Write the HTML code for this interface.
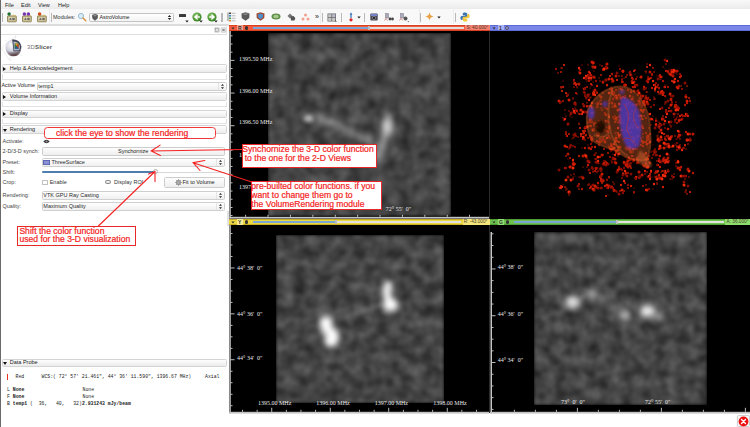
<!DOCTYPE html>
<html><head><meta charset="utf-8">
<style>
*{box-sizing:border-box;margin:0;padding:0}
html,body{width:750px;height:427px;overflow:hidden;background:#fff}
body{position:relative;font-family:"Liberation Sans",sans-serif;font-size:5.5px;color:#222}
.ab{position:absolute}
.t{position:absolute;white-space:pre;line-height:1}
.hdr{position:absolute;left:2px;width:225px;height:8.6px;border:1px solid #d4d4d4;border-radius:1.5px;background:linear-gradient(#fdfdfd,#ececec)}
.hdr .tri{position:absolute;left:0.2px;top:1.8px;width:0;height:0;border-left:3px solid #111;border-top:2px solid transparent;border-bottom:2px solid transparent}
.hdr .tri.d{left:-0.3px;top:2.3px;border-top:3px solid #111;border-left:2px solid transparent;border-right:2px solid transparent;border-bottom:0}
.hdr .lb{position:absolute;left:6.8px;top:0.6px;white-space:pre;line-height:1;color:#222}
.frm{position:absolute;left:2px;width:225px;border:1px solid #e2e2e2;border-top:0;background:#fff}
.cmb{position:absolute;height:9px;border:1px solid #cfcfcf;border-radius:1.5px;background:linear-gradient(#fefefe,#f0f0f0)}
.cmb .lb{position:absolute;left:3px;top:1.5px;white-space:pre;line-height:1;color:#111}
.spin{position:absolute;right:2px;top:1px;width:4px;height:6px}
.lbl{position:absolute;left:3px;white-space:pre;line-height:1;color:#333}
.ann{position:absolute;font-size:8.6px;line-height:1;color:#f52222;white-space:pre;-webkit-text-stroke:0.2px #f52222}
.serif{font-family:"Liberation Serif",serif;color:#e8e8e8;font-size:6px;line-height:1;position:absolute;white-space:pre}
.mono{font-family:"Liberation Mono",monospace;font-size:4.8px;line-height:1;position:absolute;white-space:pre;color:#222}
</style></head><body>

<div class="ab" style="left:0;top:0;width:750px;height:9px;background:linear-gradient(#f9f9f9,#ebebeb)"></div>
<div class="ab" style="left:0;top:9px;width:750px;height:15px;background:#fff"></div>
<div class="ab" style="left:0;top:9px;width:470px;height:15px;background:#f8f8f8"></div>
<div class="ab" style="left:0;top:24px;width:229px;height:1.5px;background:#dcdcdc"></div>
<div class="t" style="left:5px;top:3px;font-size:5.5px;color:#222">File</div>
<div class="t" style="left:21px;top:3px;font-size:5.5px;color:#222">Edit</div>
<div class="t" style="left:38px;top:3px;font-size:5.5px;color:#222">View</div>
<div class="t" style="left:58px;top:3px;font-size:5.5px;color:#222">Help</div>
<div class="ab" style="left:0;top:0;width:1px;height:427px;background:#6a6a6a"></div>
<svg class="ab" style="left:6.9px;top:11px" width="10" height="12" viewBox="0 0 10 12"><rect x="0.5" y="4.9" width="8.8" height="5.9" rx="0.5" fill="#c9bd8e" stroke="#857848" stroke-width="0.8"/><path d="M5.2 4.8 Q6.5 3.4 8.6 4.6" fill="#e2cc60" stroke="#c8b050" stroke-width="0.5"/><rect x="1.6" y="6.3" width="6.6" height="3" fill="#ddd6b8"/><path d="M2.2 8.8 L3.5 7 L4.5 8.8 M5.5 7.2 H7.5 V8.8 H5.5 Z" fill="#555" stroke="#555" stroke-width="0.4"/><circle cx="2.1" cy="3" r="1.75" fill="#1f6e34"/></svg>
<svg class="ab" style="left:21.6px;top:11px" width="10" height="12" viewBox="0 0 10 12"><rect x="0.5" y="4.9" width="8.8" height="5.9" rx="0.5" fill="#c9bd8e" stroke="#857848" stroke-width="0.8"/><path d="M5.2 4.8 Q6.5 3.4 8.6 4.6" fill="#e2cc60" stroke="#c8b050" stroke-width="0.5"/><rect x="1.6" y="6.3" width="6.6" height="3" fill="#ddd6b8"/><path d="M2.2 8.8 L3.5 7 L4.5 8.8 M5.5 7.2 H7.5 V8.8 H5.5 Z" fill="#555" stroke="#555" stroke-width="0.4"/><circle cx="2.4" cy="3" r="1.75" fill="#7a34b0"/><circle cx="6.4" cy="3" r="1.75" fill="#7a34b0"/></svg>
<svg class="ab" style="left:36.6px;top:11px" width="10" height="12" viewBox="0 0 10 12"><rect x="0.5" y="4.9" width="8.8" height="5.9" rx="0.5" fill="#c9bd8e" stroke="#857848" stroke-width="0.8"/><path d="M5.2 4.8 Q6.5 3.4 8.6 4.6" fill="#e2cc60" stroke="#c8b050" stroke-width="0.5"/><rect x="1.6" y="6.3" width="6.6" height="3" fill="#ddd6b8"/><path d="M2.2 8.8 L3.5 7 L4.5 8.8 M5.5 7.2 H7.5 V8.8 H5.5 Z" fill="#555" stroke="#555" stroke-width="0.4"/><circle cx="2.6" cy="3" r="1.75" fill="#d04a14"/></svg>
<div class="ab" style="left:48.5px;top:9px;width:1px;height:15px;background:#ececec"></div>
<div class="ab" style="left:2.0px;top:12.5px;width:1.2px;height:9px;background:#b8b8b8"></div>
<div class="ab" style="left:51.0px;top:12.5px;width:1.2px;height:9px;background:#b8b8b8"></div>
<div class="t" style="left:53px;top:15px;font-size:5.5px;color:#333">Modules:</div>
<svg class="ab" style="left:77px;top:12px" width="10" height="10" viewBox="0 0 10 10"><circle cx="4" cy="4" r="2.6" fill="#d9ecf7" stroke="#8fb6d0" stroke-width="0.9"/><path d="M6 6 L8.8 8.8" stroke="#d8903a" stroke-width="1.4" stroke-linecap="round"/></svg>
<div class="ab" style="left:88.5px;top:12.5px;width:85.5px;height:9px;border:1px solid #c4c4c4;border-radius:1.5px;background:linear-gradient(#fff,#f3f3f3)"></div>
<svg class="ab" style="left:92.3px;top:13.8px" width="6" height="7" viewBox="0 0 6 7"><path d="M0.4 1.1 L3 0.3 L5.6 1.1 L5.4 4.3 L3 6.4 L0.6 4.3 Z" fill="#5a5a5a" stroke="#333" stroke-width="0.4"/><path d="M1 1.5 L3 0.9 L5 1.5 L3 2.4 Z" fill="#999"/></svg>
<div class="t" style="left:99.5px;top:15px;font-size:5.3px;color:#222">AstroVolume</div>
<svg class="ab" style="left:167px;top:13.5px" width="5" height="7" viewBox="0 0 5 7"><path d="M0.8 3 L2.5 1 L4.2 3 Z M0.8 4 L2.5 6 L4.2 4 Z" fill="#222"/></svg>
<div class="ab" style="left:178.7px;top:14.4px;width:7px;height:2.2px;background:#3a3a3a;border-radius:0.5px"></div>
<svg class="ab" style="left:185px;top:20.0px" width="4" height="3" viewBox="0 0 4 3"><path d="M0.3 0.4 H3.7 L2 2.6 Z" fill="#222"/></svg>
<svg class="ab" style="left:191.9px;top:11.5px" width="10" height="10" viewBox="0 0 10 10"><defs><radialGradient id="g196.9" cx="0.4" cy="0.35" r="0.7"><stop offset="0" stop-color="#8cc66a"/><stop offset="1" stop-color="#2f7d1c"/></radialGradient></defs><circle cx="5" cy="5" r="4.6" fill="url(#g196.9)"/><path d="M5.2 3 L2.8 5 L5.2 7 M3 5 L7.3 5" fill="none" stroke="#fff" stroke-width="1.4" stroke-linecap="round" stroke-linejoin="round"/></svg>
<svg class="ab" style="left:199.4px;top:20.0px" width="4" height="3" viewBox="0 0 4 3"><path d="M0.3 0.4 H3.7 L2 2.6 Z" fill="#222"/></svg>
<svg class="ab" style="left:206.8px;top:11.5px" width="10" height="10" viewBox="0 0 10 10"><defs><radialGradient id="g211.8" cx="0.4" cy="0.35" r="0.7"><stop offset="0" stop-color="#8cc66a"/><stop offset="1" stop-color="#2f7d1c"/></radialGradient></defs><circle cx="5" cy="5" r="4.6" fill="url(#g211.8)"/><path d="M4.8 3 L7.2 5 L4.8 7 M7 5 L2.7 5" fill="none" stroke="#fff" stroke-width="1.4" stroke-linecap="round" stroke-linejoin="round"/></svg>
<svg class="ab" style="left:214.3px;top:20.0px" width="4" height="3" viewBox="0 0 4 3"><path d="M0.3 0.4 H3.7 L2 2.6 Z" fill="#222"/></svg>
<div class="ab" style="left:221.4px;top:12.5px;width:1.2px;height:9px;background:#b8b8b8"></div>
<svg class="ab" style="left:226.5px;top:12px" width="9" height="10" viewBox="0 0 9 10"><path d="M1 0.5 V9" stroke="#333" stroke-width="0.6"/><rect x="2" y="0.5" width="2" height="1.6" fill="#444"/><rect x="2" y="3" width="2" height="1.6" fill="#4a8ad0"/><rect x="2" y="5.5" width="2" height="1.6" fill="#4aa050"/><rect x="2" y="8" width="2" height="1.6" fill="#e09a3a"/><path d="M4.5 1.3 H8.5 M4.5 3.8 H8.5 M4.5 6.3 H8.5 M4.5 8.8 H8.5" stroke="#aaa" stroke-width="0.8"/></svg>
<svg class="ab" style="left:240.5px;top:12px" width="9" height="9" viewBox="0 0 9 9"><path d="M0.5 1.5 L4.5 0.3 L8.5 1.5 L8.3 6 L4.5 8.7 L0.7 6 Z" fill="#5a5a5a"/><path d="M1.5 2 L4.5 1.2 L7.5 2 L4.5 3.2 Z" fill="#888"/></svg>
<svg class="ab" style="left:256px;top:12px" width="9" height="9" viewBox="0 0 9 9"><path d="M0.5 1.5 L4.5 0.3 L8.5 1.5 L8.3 6 L4.5 8.7 L0.7 6 Z" fill="#a04a30"/><path d="M2 2.4 L4.5 1.6 L7 2.4 L6.8 5.5 L4.5 7.2 L2.2 5.5 Z" fill="#4d8fd0"/></svg>
<svg class="ab" style="left:270.5px;top:13px" width="10" height="7" viewBox="0 0 10 7"><ellipse cx="5" cy="3.5" rx="4.5" ry="3" fill="#5d8f45"/><ellipse cx="5" cy="3.5" rx="2.8" ry="1.7" fill="#a8c890"/></svg>
<svg class="ab" style="left:286.5px;top:13px" width="9" height="8" viewBox="0 0 9 8"><path d="M0.5 3 L3 0.5 L5.5 3 L3 5.5 Z" fill="#777"/><path d="M3.5 3.5 L6.5 3 L8.3 5 L7.5 7.5 L4 7.5 Z" fill="#555"/></svg>
<svg class="ab" style="left:301px;top:12.5px" width="9" height="8" viewBox="0 0 9 8"><circle cx="4.5" cy="2" r="1.5" fill="#f2a08f"/><circle cx="2" cy="6" r="1.5" fill="#f2a08f"/><circle cx="7" cy="6" r="1.5" fill="#f2a08f"/></svg>
<div class="t" style="left:315px;top:13px;font-size:7px;color:#222">»</div>
<div class="ab" style="left:320px;top:9px;width:1px;height:15px;background:#ececec"></div>
<div class="ab" style="left:322.2px;top:12.5px;width:1.2px;height:9px;background:#b8b8b8"></div>
<svg class="ab" style="left:326.5px;top:12.5px" width="10" height="9" viewBox="0 0 10 9"><rect x="0.5" y="0.5" width="8.5" height="8" fill="#666"/><rect x="1.2" y="1.2" width="3.2" height="3" fill="#c8c8c8"/><rect x="5.1" y="1.2" width="3.2" height="3" fill="#b8bcd0"/><rect x="1.2" y="4.9" width="3.2" height="3" fill="#c8c8c8"/><rect x="5.1" y="4.9" width="3.2" height="3" fill="#c8c8c8"/><path d="M8 7.5 L9.6 8.8" stroke="#333" stroke-width="0.8"/></svg>
<div class="ab" style="left:340.5px;top:12.5px;width:1.2px;height:9px;background:#b8b8b8"></div>
<svg class="ab" style="left:347.5px;top:12px" width="6" height="10" viewBox="0 0 6 10"><path d="M3 0.5 L4.5 2.5 L3.6 2.5 L3.6 6 L2.4 6 L2.4 2.5 L1.5 2.5 Z" fill="#2f6fb8"/><circle cx="3" cy="7.8" r="1.6" fill="#e0202a"/></svg>
<svg class="ab" style="left:357px;top:15.5px" width="4" height="3" viewBox="0 0 4 3"><path d="M0.3 0.4 H3.7 L2 2.6 Z" fill="#222"/></svg>
<div class="ab" style="left:364.0px;top:12.5px;width:1.2px;height:9px;background:#b8b8b8"></div>
<svg class="ab" style="left:369.5px;top:12.5px" width="8" height="8" viewBox="0 0 8 8"><rect x="0.3" y="0.5" width="7.4" height="7" rx="1" fill="#4a4a55"/><rect x="1" y="1.1" width="6" height="1.8" fill="#7a8ad8"/><circle cx="4" cy="5" r="1.6" fill="#222" stroke="#bbb" stroke-width="0.5"/></svg>
<svg class="ab" style="left:383.5px;top:12.5px" width="10" height="9" viewBox="0 0 10 9"><rect x="1.5" y="0.5" width="3" height="4.5" fill="#aab" stroke="#667" stroke-width="0.4"/><path d="M0.5 7.5 L2 5.5 L3.5 7.5" fill="none" stroke="#c05040" stroke-width="0.6"/><circle cx="6" cy="6" r="1.4" fill="#444"/><circle cx="8.5" cy="6" r="1.4" fill="#444"/></svg>
<svg class="ab" style="left:398.5px;top:12.5px" width="11" height="10" viewBox="0 0 11 10"><rect x="1.5" y="0.5" width="3" height="4.5" fill="#aab" stroke="#667" stroke-width="0.4"/><path d="M0.5 7.5 L2 5.5 L3.5 7.5" fill="none" stroke="#c05040" stroke-width="0.6"/><circle cx="6.5" cy="5.5" r="2" fill="#555"/><path d="M8.5 8.3 L10 8.3 L9.25 9.3 Z" fill="#222"/></svg>
<div class="ab" style="left:418.5px;top:9px;width:1px;height:15px;background:#ececec"></div>
<div class="ab" style="left:420.1px;top:12.5px;width:1.2px;height:9px;background:#b8b8b8"></div>
<svg class="ab" style="left:425px;top:12px" width="9" height="9" viewBox="0 0 9 9"><path d="M4.5 0.3 Q4.9 4.1 8.7 4.5 Q4.9 4.9 4.5 8.7 Q4.1 4.9 0.3 4.5 Q4.1 4.1 4.5 0.3 Z" fill="#e8a040"/></svg>
<svg class="ab" style="left:436.7px;top:15.5px" width="4" height="3" viewBox="0 0 4 3"><path d="M0.3 0.4 H3.7 L2 2.6 Z" fill="#222"/></svg>
<div class="ab" style="left:453px;top:9px;width:1px;height:15px;background:#ececec"></div>
<div class="ab" style="left:455.3px;top:12.5px;width:1.2px;height:9px;background:#b8b8b8"></div>
<svg class="ab" style="left:459.5px;top:11.5px" width="10" height="10" viewBox="0 0 10 10"><path d="M5 0.5 C2.5 0.5 2.8 1.6 2.8 2.6 V3.6 H5.2 V4.1 H1.8 C0.6 4.1 0.3 5.2 0.4 6.3 C0.5 7.4 1 7.9 1.8 7.9 H2.7 V6.7 C2.7 5.9 3.3 5.3 4.1 5.3 H6.2 C6.9 5.3 7.3 4.8 7.3 4.1 V2.3 C7.3 1.3 6.4 0.5 5 0.5 Z" fill="#3b74b0"/><path d="M5 9.5 C7.5 9.5 7.2 8.4 7.2 7.4 V6.4 H4.8 V5.9 H8.2 C9.4 5.9 9.7 4.8 9.6 3.7 C9.5 2.6 9 2.1 8.2 2.1 H7.3 V3.3 C7.3 4.1 6.7 4.7 5.9 4.7 H3.8 C3.1 4.7 2.7 5.2 2.7 5.9 V7.7 C2.7 8.7 3.6 9.5 5 9.5 Z" fill="#f2c83a"/></svg>
<div class="ab" style="left:1px;top:25.5px;width:226px;height:9px;background:#fff;border-bottom:1px solid #dedede;border-right:1px solid #e6e6e6"></div>
<svg class="ab" style="left:213.5px;top:26.5px" width="13" height="6" viewBox="0 0 13 6"><rect x="0.5" y="0.5" width="5" height="5" rx="1" fill="#e4e4e4" stroke="#c8c8c8" stroke-width="0.5"/><rect x="1.7" y="1.7" width="2.6" height="2.6" fill="none" stroke="#888" stroke-width="0.5"/><rect x="7" y="0.5" width="5" height="5" rx="1" fill="#e4e4e4" stroke="#c8c8c8" stroke-width="0.5"/><path d="M8.3 1.8 L10.7 4.2 M10.7 1.8 L8.3 4.2" stroke="#555" stroke-width="0.7"/></svg>
<svg class="ab" style="left:0;top:34px" width="30" height="30" viewBox="0 34 30 30">
<defs><radialGradient id="sph" cx="0.38" cy="0.35" r="0.7"><stop offset="0" stop-color="#fdfdff"/><stop offset="0.55" stop-color="#d0d0dc"/><stop offset="0.85" stop-color="#9a98a8"/><stop offset="1" stop-color="#6a6070"/></radialGradient>
<linearGradient id="shb" x1="0" y1="0" x2="0.3" y2="1"><stop offset="0" stop-color="#6a5a60" stop-opacity="0"/><stop offset="1" stop-color="#4a2a2a" stop-opacity="0.9"/></linearGradient></defs>
<path d="M1.5 48 L16 35.5 L10 61 Z M5 40 L22 56" fill="none" stroke="#d4d4d4" stroke-width="0.45"/>
<circle cx="13.4" cy="47.4" r="8" fill="url(#sph)"/>
<path d="M6 51 A8 8 0 0 0 21 51 Q14 53 6 51 Z" fill="url(#shb)"/>
<path d="M12.2 39.6 A7.9 7.9 0 0 1 21.3 46.5 L20 51 L13.5 51.5 Z" fill="#3e4152"/>
<path d="M13.4 41.4 A6.2 6.2 0 0 1 20 46.8 L19.3 50.2 L14 50.6 Z" fill="#b4b6c4"/>
<path d="M14.6 43.4 L18.6 43.4 L18.6 48.8 L14.6 48.8 Z" fill="#2f7a3a"/>
<path d="M14.6 43.4 L18.6 43.4 L16.6 46.1 Z" fill="#d89a20"/>
<path d="M18.6 43.4 L18.6 48.8 L16.6 46.1 Z" fill="#d8401c"/>
<path d="M14.6 48.8 L18.6 48.8 L16.6 46.1 Z" fill="#2452a8"/>
</svg>
<div class="t" style="left:27px;top:44.3px;font-size:6px;color:#777;letter-spacing:0.15px">3D<b style="color:#555">Slicer</b></div>
<div class="hdr" style="top:64.2px"><div class="tri"></div><div class="lb">Help &amp; Acknowledgement</div></div>
<div class="frm" style="top:73.5px;height:6.5px"></div>
<div class="t" style="left:1.5px;top:83px;font-size:5.3px;color:#222">Active Volume</div>
<div class="cmb" style="left:36.5px;top:81.5px;width:190px"></div>
<div class="ab" style="left:217.5px;top:82.5px;width:1px;height:7px;background:#e4e4e4"></div>
<div class="t" style="left:38.3px;top:83.7px;font-size:5.5px;color:#2a2a2a">temp1</div>
<svg class="ab" style="left:219.5px;top:82.5px" width="5" height="7" viewBox="0 0 5 7"><path d="M1 2.8 L2.5 1 L4 2.8 Z M1 4.2 L2.5 6 L4 4.2 Z" fill="#222"/></svg>
<div class="hdr" style="top:92.4px"><div class="tri"></div><div class="lb">Volume Information</div></div>
<div class="frm" style="top:101.5px;height:5px"></div>
<div class="hdr" style="top:109.5px"><div class="tri"></div><div class="lb">Display</div></div>
<div class="frm" style="top:118.5px;height:5px"></div>
<div class="hdr" style="top:125.4px"><div class="tri d"></div><div class="lb">Rendering</div></div>
<div class="t" style="left:2.5px;top:138.5px;font-size:5.5px;color:#444">Activate:</div>
<div class="t" style="left:2.5px;top:149.0px;font-size:5.5px;color:#444">2-D/3-D synch:</div>
<div class="t" style="left:2.5px;top:160.2px;font-size:5.5px;color:#444">Preset:</div>
<div class="t" style="left:2.5px;top:169.7px;font-size:5.5px;color:#444">Shift:</div>
<div class="t" style="left:2.5px;top:179.5px;font-size:5.5px;color:#444">Crop:</div>
<div class="t" style="left:2.5px;top:192.79999999999998px;font-size:5.5px;color:#444">Rendering:</div>
<div class="t" style="left:2.5px;top:203.7px;font-size:5.5px;color:#444">Quality:</div>
<svg class="ab" style="left:42.5px;top:138.5px" width="7" height="5" viewBox="0 0 7 5"><path d="M0.3 2.5 Q3.5 -0.8 6.7 2.5 Q3.5 5.8 0.3 2.5 Z" fill="#333"/><circle cx="3.5" cy="2.5" r="1" fill="#999"/></svg>
<div class="ab" style="left:41.5px;top:147px;width:183.5px;height:8.5px;border:1px solid #cdcdcd;border-radius:1.5px;background:linear-gradient(#fdfdfd,#eeeeee)"></div>
<div class="t" style="left:118px;top:149px;font-size:5.5px;color:#222">Synchornize</div>
<div class="cmb" style="left:41.5px;top:158px;width:183.5px"></div>
<div class="ab" style="left:216.0px;top:159px;width:1px;height:7px;background:#e4e4e4"></div>
<div class="ab" style="left:43.3px;top:160.3px;width:6.5px;height:4.5px;background:#8a90d8;border:0.5px solid #6068b0"></div>
<div class="t" style="left:51.5px;top:160.2px;font-size:5.5px;color:#2a2a2a">ThreeSurface</div>
<svg class="ab" style="left:218.0px;top:159px" width="5" height="7" viewBox="0 0 5 7"><path d="M1 2.8 L2.5 1 L4 2.8 Z M1 4.2 L2.5 6 L4 4.2 Z" fill="#222"/></svg>
<div class="ab" style="left:41.5px;top:171.5px;width:183.5px;height:1.8px;background:#d8d8d8;border-radius:1px"></div>
<div class="ab" style="left:41.5px;top:171.3px;width:113.5px;height:2px;background:#4f7fae;border-radius:1px"></div>
<div class="ab" style="left:152.6px;top:169.3px;width:5px;height:5px;background:radial-gradient(#fff,#e8e8e8);border:0.5px solid #b4b4b4;border-radius:50%"></div>
<div class="ab" style="left:42.2px;top:179.5px;width:5.4px;height:5.3px;border:0.6px solid #c0c0c0;border-radius:0.5px;background:#fff"></div>
<div class="t" style="left:49.7px;top:180px;font-size:5.5px;color:#333">Enable</div>
<div class="ab" style="left:105.4px;top:180px;width:5.3px;height:4.4px;border:0.6px solid #888;border-radius:50%;background:linear-gradient(#fff,#e4e4e4)"></div>
<div class="t" style="left:114px;top:180px;font-size:5.5px;color:#333">Display ROI</div>
<div class="ab" style="left:164.2px;top:177.2px;width:61px;height:10.5px;border:1px solid #cdcdcd;border-radius:1.5px;background:linear-gradient(#fdfdfd,#efefef)"></div>
<svg class="ab" style="left:175px;top:179px" width="7" height="7" viewBox="0 0 7 7"><circle cx="3.5" cy="3.5" r="2.2" fill="#aaa" stroke="#666" stroke-width="0.5"/><path d="M3.5 0.2 V1.4 M3.5 5.6 V6.8 M0.2 3.5 H1.4 M5.6 3.5 H6.8 M1.2 1.2 L2 2 M5 5 L5.8 5.8 M1.2 5.8 L2 5 M5 2 L5.8 1.2" stroke="#666" stroke-width="0.6"/></svg>
<div class="t" style="left:182.5px;top:180px;font-size:5.5px;color:#222">Fit to Volume</div>
<div class="cmb" style="left:41.5px;top:190.6px;width:183.5px"></div>
<div class="ab" style="left:216.0px;top:191.6px;width:1px;height:7px;background:#e4e4e4"></div>
<div class="t" style="left:43.3px;top:192.79999999999998px;font-size:5.5px;color:#2a2a2a">VTK GPU Ray Casting</div>
<svg class="ab" style="left:218.0px;top:191.6px" width="5" height="7" viewBox="0 0 5 7"><path d="M1 2.8 L2.5 1 L4 2.8 Z M1 4.2 L2.5 6 L4 4.2 Z" fill="#222"/></svg>
<div class="cmb" style="left:41.5px;top:201.6px;width:183.5px"></div>
<div class="ab" style="left:216.0px;top:202.6px;width:1px;height:7px;background:#e4e4e4"></div>
<div class="t" style="left:43.3px;top:203.79999999999998px;font-size:5.5px;color:#2a2a2a">Maximum Quality</div>
<svg class="ab" style="left:218.0px;top:202.6px" width="5" height="7" viewBox="0 0 5 7"><path d="M1 2.8 L2.5 1 L4 2.8 Z M1 4.2 L2.5 6 L4 4.2 Z" fill="#222"/></svg>
<div class="ab" style="left:227.2px;top:211px;width:2px;height:15px;background:#e2e2e2"></div>
<div class="hdr" style="top:358.8px"><div class="tri d"></div><div class="lb">Data Probe</div></div>
<div class="ab" style="left:7px;top:374px;width:1.3px;height:5.6px;background:#e8321e"></div>
<div class="mono" style="left:15.5px;top:375.2px">Red</div>
<div class="mono" style="left:41.5px;top:375.2px">WCS:( 72° 57' 21.461", 44° 36' 11.590", 1396.67 MHz)</div>
<div class="mono" style="left:205px;top:375.2px">Axial</div>
<div class="mono" style="left:7px;top:387.8px">L <b>None</b></div>
<div class="mono" style="left:82.5px;top:387.8px">None</div>
<div class="mono" style="left:7px;top:395.1px">F <b>None</b></div>
<div class="mono" style="left:82.5px;top:395.1px">None</div>
<div class="mono" style="left:7px;top:402.3px">B <b>temp1</b> (  36,   40,   32)<b>2.931243 mJy/beam</b></div>
<div class="ab" style="left:229px;top:31px;width:521px;height:382px;background:#000"></div>
<svg class="ab" style="left:0;top:0" width="750" height="427" viewBox="0 0 750 427">
<defs>
<filter id="nz" x="0" y="0" width="100%" height="100%" color-interpolation-filters="sRGB">
 <feTurbulence type="fractalNoise" baseFrequency="0.08" numOctaves="2" seed="4"/>
 <feColorMatrix type="matrix" values="0.34 0 0 0 0.098  0.34 0 0 0 0.098  0.34 0 0 0 0.098  0 0 0 0 1"/>
 <feGaussianBlur stdDeviation="1.6"/>
</filter>
<filter id="nz2" x="0" y="0" width="100%" height="100%" color-interpolation-filters="sRGB">
 <feTurbulence type="fractalNoise" baseFrequency="0.085" numOctaves="2" seed="11"/>
 <feColorMatrix type="matrix" values="0.34 0 0 0 0.098  0.34 0 0 0 0.098  0.34 0 0 0 0.098  0 0 0 0 1"/>
 <feGaussianBlur stdDeviation="1.5"/>
</filter>
<filter id="nz3" x="0" y="0" width="100%" height="100%" color-interpolation-filters="sRGB">
 <feTurbulence type="fractalNoise" baseFrequency="0.09" numOctaves="2" seed="23"/>
 <feColorMatrix type="matrix" values="0.34 0 0 0 0.098  0.34 0 0 0 0.098  0.34 0 0 0 0.098  0 0 0 0 1"/>
 <feGaussianBlur stdDeviation="1.5"/>
</filter>
<filter id="bl3" filterUnits="userSpaceOnUse" x="0" y="0" width="750" height="427"><feGaussianBlur stdDeviation="3"/></filter>
<filter id="bl2" filterUnits="userSpaceOnUse" x="0" y="0" width="750" height="427"><feGaussianBlur stdDeviation="2"/></filter>
<filter id="bl1" filterUnits="userSpaceOnUse" x="0" y="0" width="750" height="427"><feGaussianBlur stdDeviation="1.2"/></filter>
<filter id="bl06" filterUnits="userSpaceOnUse" x="0" y="0" width="750" height="427"><feGaussianBlur stdDeviation="0.7"/></filter>
<clipPath id="cr"><rect x="268" y="33" width="183" height="183"/></clipPath>
<clipPath id="cy"><rect x="276" y="235.3" width="167.5" height="167"/></clipPath>
<clipPath id="cg"><rect x="534.2" y="232.8" width="172" height="172"/></clipPath>
</defs>
<rect x="268" y="33" width="183" height="183" filter="url(#nz)"/>
<rect x="276" y="235.3" width="167.5" height="167" filter="url(#nz2)"/>
<rect x="534.2" y="232.8" width="172" height="172" filter="url(#nz3)"/>
<g clip-path="url(#cr)" fill="#fff">
 <ellipse cx="308.5" cy="118.5" rx="5" ry="4" opacity="0.6" filter="url(#bl2)"/>
 <path d="M316 118 Q334 122 350 132 Q362 139 372 141" stroke="#fff" stroke-width="8" fill="none" opacity="0.3" filter="url(#bl3)"/>
 <path d="M388 113 Q388 130 382 145 Q379 152 377 160" stroke="#fff" stroke-width="7" fill="none" opacity="0.55" filter="url(#bl3)"/>
 <ellipse cx="387.5" cy="126" rx="4" ry="7" opacity="0.6" filter="url(#bl3)"/>
</g>
<g clip-path="url(#cy)" fill="#fff">
 <path d="M338 320 Q360 312 382 305" stroke="#fff" stroke-width="4" fill="none" opacity="0.15" filter="url(#bl2)"/>
 <g filter="url(#bl3)">
 <path d="M388.5 285 Q385 293 388 298 Q392 302 390.5 306" stroke="#fff" stroke-width="8" fill="none" stroke-linecap="round"/>
 <ellipse cx="390.5" cy="305" rx="8" ry="6.5"/>
 <path d="M327 321 Q322 327 331 332 Q337 336 331 342" stroke="#fff" stroke-width="10" fill="none" stroke-linecap="round"/>
 <ellipse cx="326" cy="322" rx="7" ry="6"/>
 <ellipse cx="331" cy="341" rx="7" ry="6.5"/>
 </g>
</g>
<g clip-path="url(#cg)" fill="#fff">
 <path d="M578 300 Q592 290 604 300 Q614 310 628 316" stroke="#fff" stroke-width="6" fill="none" opacity="0.25" filter="url(#bl3)"/>
 <ellipse cx="572.5" cy="302" rx="7" ry="6.5" opacity="0.85" filter="url(#bl3)"/>
 <ellipse cx="594" cy="293" rx="5" ry="5" opacity="0.35" filter="url(#bl3)"/>
 <ellipse cx="625" cy="316" rx="6" ry="4.5" opacity="0.6" filter="url(#bl3)"/>
 <ellipse cx="647.5" cy="311" rx="8" ry="6" opacity="0.9" filter="url(#bl3)"/>
 <ellipse cx="659" cy="316" rx="5" ry="4" opacity="0.5" filter="url(#bl3)"/>
</g>

<g filter="url(#bl06)"><circle cx="589" cy="162" r="1.5" fill="#c01806"/><circle cx="588" cy="161" r="1.5" fill="#800e02"/><circle cx="674" cy="72" r="1.0" fill="#901004"/><circle cx="676" cy="73" r="0.8" fill="#800e02"/><circle cx="680" cy="77" r="1.2" fill="#d01c06"/><circle cx="675" cy="71" r="1.2" fill="#d01c06"/><circle cx="673" cy="72" r="1.2" fill="#f02a0c"/><circle cx="561" cy="87" r="1.0" fill="#c01806"/><circle cx="563" cy="87" r="1.2" fill="#901004"/><circle cx="563" cy="87" r="1.2" fill="#b01606"/><circle cx="561" cy="88" r="0.8" fill="#b01606"/><circle cx="628" cy="90" r="1.2" fill="#901004"/><circle cx="631" cy="92" r="1.2" fill="#c01806"/><circle cx="631" cy="90" r="1.0" fill="#901004"/><circle cx="667" cy="61" r="1.2" fill="#f02a0c"/><circle cx="666" cy="64" r="0.8" fill="#d01c06"/><circle cx="665" cy="60" r="1.5" fill="#800e02"/><circle cx="648" cy="107" r="0.6" fill="#800e02"/><circle cx="571" cy="175" r="0.8" fill="#b01606"/><circle cx="665" cy="161" r="1.2" fill="#901004"/><circle cx="666" cy="161" r="1.5" fill="#f02a0c"/><circle cx="664" cy="160" r="1.5" fill="#c01806"/><circle cx="664" cy="160" r="1.0" fill="#c01806"/><circle cx="665" cy="160" r="1.2" fill="#d01c06"/><circle cx="669" cy="144" r="0.8" fill="#d01c06"/><circle cx="632" cy="156" r="1.0" fill="#f02a0c"/><circle cx="637" cy="159" r="1.2" fill="#c01806"/><circle cx="634" cy="159" r="1.0" fill="#800e02"/><circle cx="634" cy="156" r="0.6" fill="#b01606"/><circle cx="587" cy="102" r="0.6" fill="#800e02"/><circle cx="589" cy="100" r="1.2" fill="#f02a0c"/><circle cx="587" cy="99" r="0.6" fill="#c01806"/><circle cx="589" cy="78" r="1.5" fill="#f02a0c"/><circle cx="642" cy="111" r="1.0" fill="#c01806"/><circle cx="642" cy="110" r="1.0" fill="#b01606"/><circle cx="644" cy="110" r="1.2" fill="#b01606"/><circle cx="586" cy="98" r="1.2" fill="#800e02"/><circle cx="587" cy="97" r="0.8" fill="#800e02"/><circle cx="585" cy="96" r="1.0" fill="#b01606"/><circle cx="641" cy="145" r="1.0" fill="#c01806"/><circle cx="656" cy="83" r="1.0" fill="#b01606"/><circle cx="653" cy="81" r="1.2" fill="#f02a0c"/><circle cx="654" cy="85" r="1.2" fill="#f02a0c"/><circle cx="655" cy="85" r="1.2" fill="#b01606"/><circle cx="648" cy="177" r="0.6" fill="#b01606"/><circle cx="648" cy="177" r="0.8" fill="#800e02"/><circle cx="647" cy="176" r="0.6" fill="#b01606"/><circle cx="650" cy="175" r="1.0" fill="#b01606"/><circle cx="595" cy="90" r="1.5" fill="#c01806"/><circle cx="593" cy="90" r="0.6" fill="#901004"/><circle cx="675" cy="105" r="1.0" fill="#f02a0c"/><circle cx="675" cy="104" r="0.6" fill="#800e02"/><circle cx="676" cy="102" r="0.8" fill="#c01806"/><circle cx="672" cy="104" r="0.8" fill="#d01c06"/><circle cx="610" cy="187" r="0.6" fill="#d01c06"/><circle cx="609" cy="186" r="1.2" fill="#b01606"/><circle cx="608" cy="188" r="1.2" fill="#c01806"/><circle cx="593" cy="95" r="1.0" fill="#b01606"/><circle cx="594" cy="94" r="1.5" fill="#f02a0c"/><circle cx="593" cy="93" r="1.0" fill="#f02a0c"/><circle cx="594" cy="92" r="1.5" fill="#d01c06"/><circle cx="591" cy="144" r="0.8" fill="#f02a0c"/><circle cx="591" cy="144" r="1.0" fill="#901004"/><circle cx="592" cy="139" r="1.5" fill="#d01c06"/><circle cx="609" cy="93" r="1.2" fill="#901004"/><circle cx="612" cy="92" r="1.5" fill="#c01806"/><circle cx="612" cy="93" r="0.6" fill="#800e02"/><circle cx="573" cy="146" r="1.0" fill="#800e02"/><circle cx="575" cy="147" r="1.2" fill="#800e02"/><circle cx="570" cy="146" r="0.8" fill="#901004"/><circle cx="690" cy="134" r="1.2" fill="#b01606"/><circle cx="688" cy="134" r="1.5" fill="#f02a0c"/><circle cx="686" cy="132" r="1.2" fill="#c01806"/><circle cx="693" cy="134" r="1.5" fill="#c01806"/><circle cx="689" cy="133" r="0.8" fill="#800e02"/><circle cx="647" cy="136" r="0.6" fill="#c01806"/><circle cx="650" cy="134" r="1.2" fill="#901004"/><circle cx="649" cy="134" r="0.6" fill="#b01606"/><circle cx="648" cy="136" r="1.5" fill="#c01806"/><circle cx="646" cy="133" r="1.2" fill="#901004"/><circle cx="641" cy="77" r="1.5" fill="#d01c06"/><circle cx="642" cy="76" r="0.6" fill="#901004"/><circle cx="640" cy="78" r="0.6" fill="#800e02"/><circle cx="617" cy="192" r="0.8" fill="#c01806"/><circle cx="616" cy="191" r="1.2" fill="#800e02"/><circle cx="592" cy="129" r="0.6" fill="#800e02"/><circle cx="595" cy="131" r="0.6" fill="#800e02"/><circle cx="594" cy="126" r="0.8" fill="#c01806"/><circle cx="593" cy="130" r="1.5" fill="#f02a0c"/><circle cx="594" cy="129" r="1.2" fill="#800e02"/><circle cx="643" cy="146" r="1.2" fill="#b01606"/><circle cx="642" cy="141" r="1.2" fill="#c01806"/><circle cx="657" cy="136" r="0.8" fill="#901004"/><circle cx="659" cy="132" r="0.6" fill="#c01806"/><circle cx="661" cy="136" r="0.8" fill="#901004"/><circle cx="561" cy="188" r="1.2" fill="#c01806"/><circle cx="562" cy="187" r="1.2" fill="#c01806"/><circle cx="560" cy="188" r="1.0" fill="#f02a0c"/><circle cx="623" cy="72" r="1.0" fill="#c01806"/><circle cx="620" cy="69" r="1.0" fill="#b01606"/><circle cx="622" cy="71" r="1.0" fill="#800e02"/><circle cx="623" cy="71" r="1.5" fill="#d01c06"/><circle cx="658" cy="79" r="1.5" fill="#800e02"/><circle cx="662" cy="77" r="0.8" fill="#c01806"/><circle cx="660" cy="79" r="0.8" fill="#901004"/><circle cx="660" cy="77" r="1.0" fill="#b01606"/><circle cx="632" cy="99" r="1.5" fill="#c01806"/><circle cx="630" cy="96" r="1.2" fill="#f02a0c"/><circle cx="630" cy="96" r="0.8" fill="#b01606"/><circle cx="616" cy="90" r="1.0" fill="#b01606"/><circle cx="614" cy="92" r="0.8" fill="#f02a0c"/><circle cx="612" cy="89" r="1.2" fill="#c01806"/><circle cx="612" cy="90" r="1.0" fill="#c01806"/><circle cx="652" cy="88" r="1.2" fill="#c01806"/><circle cx="655" cy="90" r="0.8" fill="#901004"/><circle cx="655" cy="88" r="1.0" fill="#901004"/><circle cx="622" cy="79" r="0.8" fill="#d01c06"/><circle cx="602" cy="140" r="1.5" fill="#800e02"/><circle cx="601" cy="142" r="0.8" fill="#d01c06"/><circle cx="603" cy="139" r="1.5" fill="#901004"/><circle cx="602" cy="141" r="1.0" fill="#901004"/><circle cx="600" cy="139" r="1.5" fill="#800e02"/><circle cx="589" cy="72" r="1.2" fill="#b01606"/><circle cx="589" cy="184" r="0.8" fill="#d01c06"/><circle cx="589" cy="185" r="0.8" fill="#800e02"/><circle cx="588" cy="185" r="1.0" fill="#800e02"/><circle cx="567" cy="94" r="0.6" fill="#f02a0c"/><circle cx="566" cy="93" r="1.0" fill="#f02a0c"/><circle cx="569" cy="93" r="0.6" fill="#800e02"/><circle cx="586" cy="77" r="1.0" fill="#b01606"/><circle cx="630" cy="127" r="0.8" fill="#f02a0c"/><circle cx="633" cy="128" r="1.0" fill="#c01806"/><circle cx="632" cy="124" r="1.2" fill="#901004"/><circle cx="635" cy="124" r="0.6" fill="#b01606"/><circle cx="665" cy="85" r="0.6" fill="#d01c06"/><circle cx="665" cy="87" r="1.2" fill="#d01c06"/><circle cx="668" cy="87" r="1.0" fill="#d01c06"/><circle cx="667" cy="85" r="0.6" fill="#800e02"/><circle cx="664" cy="87" r="0.8" fill="#b01606"/><circle cx="613" cy="117" r="0.8" fill="#f02a0c"/><circle cx="614" cy="117" r="0.6" fill="#d01c06"/><circle cx="614" cy="119" r="0.8" fill="#c01806"/><circle cx="654" cy="153" r="1.0" fill="#b01606"/><circle cx="656" cy="152" r="0.8" fill="#f02a0c"/><circle cx="655" cy="153" r="0.6" fill="#b01606"/><circle cx="653" cy="155" r="0.8" fill="#f02a0c"/><circle cx="655" cy="150" r="0.8" fill="#800e02"/><circle cx="572" cy="117" r="0.6" fill="#c01806"/><circle cx="570" cy="115" r="0.8" fill="#800e02"/><circle cx="571" cy="113" r="1.5" fill="#800e02"/><circle cx="570" cy="116" r="0.6" fill="#d01c06"/><circle cx="571" cy="114" r="1.2" fill="#901004"/><circle cx="671" cy="96" r="1.0" fill="#800e02"/><circle cx="673" cy="96" r="1.5" fill="#800e02"/><circle cx="670" cy="93" r="0.6" fill="#800e02"/><circle cx="618" cy="120" r="0.8" fill="#800e02"/><circle cx="616" cy="120" r="0.8" fill="#f02a0c"/><circle cx="616" cy="119" r="1.5" fill="#b01606"/><circle cx="591" cy="186" r="1.0" fill="#901004"/><circle cx="593" cy="189" r="1.5" fill="#f02a0c"/><circle cx="590" cy="188" r="1.2" fill="#b01606"/><circle cx="591" cy="187" r="1.0" fill="#d01c06"/><circle cx="693" cy="173" r="1.2" fill="#c01806"/><circle cx="621" cy="89" r="1.2" fill="#f02a0c"/><circle cx="622" cy="90" r="1.5" fill="#c01806"/><circle cx="621" cy="89" r="1.0" fill="#b01606"/><circle cx="569" cy="111" r="0.8" fill="#c01806"/><circle cx="565" cy="114" r="0.6" fill="#901004"/><circle cx="565" cy="110" r="0.8" fill="#b01606"/><circle cx="566" cy="116" r="0.6" fill="#f02a0c"/><circle cx="592" cy="167" r="0.8" fill="#b01606"/><circle cx="594" cy="168" r="0.6" fill="#d01c06"/><circle cx="592" cy="168" r="1.5" fill="#800e02"/><circle cx="593" cy="169" r="1.0" fill="#800e02"/><circle cx="614" cy="191" r="1.2" fill="#901004"/><circle cx="633" cy="160" r="1.5" fill="#800e02"/><circle cx="633" cy="159" r="1.0" fill="#b01606"/><circle cx="630" cy="159" r="1.0" fill="#d01c06"/><circle cx="631" cy="159" r="1.5" fill="#800e02"/><circle cx="631" cy="164" r="0.6" fill="#b01606"/><circle cx="630" cy="163" r="0.6" fill="#f02a0c"/><circle cx="628" cy="165" r="0.8" fill="#b01606"/><circle cx="627" cy="162" r="1.2" fill="#d01c06"/><circle cx="629" cy="164" r="1.0" fill="#901004"/><circle cx="634" cy="129" r="0.6" fill="#d01c06"/><circle cx="584" cy="138" r="1.2" fill="#b01606"/><circle cx="585" cy="140" r="1.0" fill="#901004"/><circle cx="589" cy="77" r="0.8" fill="#901004"/><circle cx="591" cy="140" r="0.8" fill="#f02a0c"/><circle cx="588" cy="145" r="0.8" fill="#800e02"/><circle cx="592" cy="140" r="0.8" fill="#d01c06"/><circle cx="592" cy="142" r="0.8" fill="#c01806"/><circle cx="612" cy="139" r="0.6" fill="#901004"/><circle cx="615" cy="140" r="1.0" fill="#b01606"/><circle cx="614" cy="144" r="1.2" fill="#f02a0c"/><circle cx="682" cy="89" r="1.0" fill="#b01606"/><circle cx="592" cy="113" r="1.5" fill="#f02a0c"/><circle cx="599" cy="103" r="0.6" fill="#c01806"/><circle cx="598" cy="104" r="1.2" fill="#b01606"/><circle cx="597" cy="104" r="0.8" fill="#d01c06"/><circle cx="597" cy="107" r="1.2" fill="#800e02"/><circle cx="598" cy="103" r="1.2" fill="#901004"/><circle cx="568" cy="124" r="1.5" fill="#b01606"/><circle cx="568" cy="124" r="1.2" fill="#901004"/><circle cx="594" cy="189" r="0.8" fill="#f02a0c"/><circle cx="593" cy="189" r="0.6" fill="#b01606"/><circle cx="594" cy="190" r="1.5" fill="#b01606"/><circle cx="669" cy="156" r="0.6" fill="#800e02"/><circle cx="668" cy="158" r="1.5" fill="#b01606"/><circle cx="665" cy="104" r="0.8" fill="#b01606"/><circle cx="668" cy="101" r="1.5" fill="#800e02"/><circle cx="665" cy="102" r="0.6" fill="#d01c06"/><circle cx="666" cy="102" r="0.8" fill="#d01c06"/><circle cx="666" cy="103" r="0.6" fill="#c01806"/><circle cx="572" cy="139" r="0.6" fill="#b01606"/><circle cx="573" cy="138" r="0.8" fill="#b01606"/><circle cx="574" cy="135" r="1.0" fill="#b01606"/><circle cx="574" cy="137" r="0.8" fill="#c01806"/><circle cx="638" cy="157" r="0.6" fill="#f02a0c"/><circle cx="637" cy="158" r="0.8" fill="#d01c06"/><circle cx="638" cy="160" r="0.8" fill="#b01606"/><circle cx="641" cy="96" r="1.0" fill="#f02a0c"/><circle cx="640" cy="98" r="0.6" fill="#b01606"/><circle cx="642" cy="98" r="0.8" fill="#800e02"/><circle cx="643" cy="96" r="1.5" fill="#b01606"/><circle cx="660" cy="146" r="1.5" fill="#f02a0c"/><circle cx="659" cy="149" r="1.0" fill="#f02a0c"/><circle cx="660" cy="148" r="1.5" fill="#d01c06"/><circle cx="658" cy="135" r="0.6" fill="#f02a0c"/><circle cx="558" cy="73" r="0.8" fill="#d01c06"/><circle cx="561" cy="72" r="1.0" fill="#c01806"/><circle cx="561" cy="68" r="0.6" fill="#d01c06"/><circle cx="556" cy="69" r="1.2" fill="#901004"/><circle cx="678" cy="137" r="1.0" fill="#c01806"/><circle cx="679" cy="136" r="1.5" fill="#c01806"/><circle cx="598" cy="183" r="1.2" fill="#c01806"/><circle cx="598" cy="185" r="0.6" fill="#b01606"/><circle cx="591" cy="75" r="1.2" fill="#b01606"/><circle cx="590" cy="77" r="0.8" fill="#901004"/><circle cx="676" cy="119" r="1.0" fill="#b01606"/><circle cx="677" cy="117" r="0.8" fill="#b01606"/><circle cx="676" cy="114" r="0.6" fill="#901004"/><circle cx="674" cy="114" r="1.5" fill="#b01606"/><circle cx="674" cy="117" r="0.8" fill="#800e02"/><circle cx="579" cy="184" r="1.0" fill="#d01c06"/><circle cx="578" cy="186" r="1.5" fill="#901004"/><circle cx="579" cy="189" r="0.8" fill="#f02a0c"/><circle cx="687" cy="170" r="0.8" fill="#800e02"/><circle cx="689" cy="171" r="1.5" fill="#f02a0c"/><circle cx="688" cy="169" r="1.5" fill="#b01606"/><circle cx="678" cy="168" r="1.5" fill="#d01c06"/><circle cx="680" cy="170" r="1.2" fill="#d01c06"/><circle cx="665" cy="96" r="1.0" fill="#d01c06"/><circle cx="663" cy="95" r="1.0" fill="#f02a0c"/><circle cx="666" cy="97" r="0.6" fill="#901004"/><circle cx="573" cy="177" r="0.6" fill="#f02a0c"/><circle cx="571" cy="180" r="0.8" fill="#f02a0c"/><circle cx="571" cy="180" r="1.5" fill="#f02a0c"/><circle cx="589" cy="170" r="1.5" fill="#800e02"/><circle cx="599" cy="171" r="0.6" fill="#901004"/><circle cx="599" cy="169" r="0.6" fill="#b01606"/><circle cx="597" cy="172" r="0.8" fill="#800e02"/><circle cx="601" cy="171" r="0.6" fill="#901004"/><circle cx="597" cy="168" r="1.2" fill="#800e02"/><circle cx="641" cy="116" r="1.5" fill="#f02a0c"/><circle cx="687" cy="86" r="0.8" fill="#f02a0c"/><circle cx="685" cy="83" r="1.5" fill="#901004"/><circle cx="593" cy="77" r="0.6" fill="#f02a0c"/><circle cx="591" cy="75" r="0.8" fill="#b01606"/><circle cx="592" cy="77" r="1.0" fill="#800e02"/><circle cx="592" cy="75" r="0.6" fill="#b01606"/><circle cx="594" cy="78" r="0.6" fill="#f02a0c"/><circle cx="654" cy="105" r="1.2" fill="#800e02"/><circle cx="627" cy="114" r="0.8" fill="#901004"/><circle cx="627" cy="113" r="1.2" fill="#b01606"/><circle cx="625" cy="115" r="0.8" fill="#901004"/><circle cx="682" cy="135" r="0.6" fill="#b01606"/><circle cx="679" cy="132" r="1.2" fill="#c01806"/><circle cx="680" cy="135" r="1.2" fill="#c01806"/><circle cx="679" cy="135" r="1.2" fill="#c01806"/><circle cx="655" cy="152" r="0.6" fill="#c01806"/><circle cx="654" cy="151" r="1.5" fill="#800e02"/><circle cx="601" cy="179" r="1.2" fill="#d01c06"/><circle cx="600" cy="176" r="0.8" fill="#d01c06"/><circle cx="600" cy="177" r="1.2" fill="#d01c06"/><circle cx="601" cy="176" r="1.5" fill="#901004"/><circle cx="600" cy="101" r="0.6" fill="#b01606"/><circle cx="597" cy="104" r="1.0" fill="#901004"/><circle cx="595" cy="103" r="0.6" fill="#800e02"/><circle cx="609" cy="100" r="0.6" fill="#f02a0c"/><circle cx="612" cy="103" r="1.5" fill="#b01606"/><circle cx="613" cy="100" r="0.6" fill="#901004"/><circle cx="613" cy="99" r="1.2" fill="#901004"/><circle cx="612" cy="187" r="1.2" fill="#b01606"/><circle cx="614" cy="190" r="1.5" fill="#c01806"/><circle cx="613" cy="188" r="1.2" fill="#901004"/><circle cx="677" cy="147" r="1.0" fill="#901004"/><circle cx="680" cy="145" r="1.0" fill="#901004"/><circle cx="677" cy="146" r="0.6" fill="#d01c06"/><circle cx="680" cy="148" r="1.2" fill="#901004"/><circle cx="677" cy="146" r="0.6" fill="#d01c06"/><circle cx="615" cy="142" r="1.2" fill="#c01806"/><circle cx="616" cy="138" r="1.5" fill="#d01c06"/><circle cx="617" cy="141" r="1.2" fill="#d01c06"/><circle cx="620" cy="121" r="0.8" fill="#d01c06"/><circle cx="620" cy="120" r="1.2" fill="#b01606"/><circle cx="621" cy="120" r="1.0" fill="#901004"/><circle cx="620" cy="120" r="0.6" fill="#800e02"/><circle cx="621" cy="185" r="1.2" fill="#d01c06"/><circle cx="579" cy="72" r="0.8" fill="#901004"/><circle cx="580" cy="70" r="1.0" fill="#b01606"/><circle cx="580" cy="73" r="1.5" fill="#d01c06"/><circle cx="640" cy="105" r="1.0" fill="#800e02"/><circle cx="641" cy="107" r="0.6" fill="#f02a0c"/><circle cx="656" cy="151" r="0.6" fill="#d01c06"/><circle cx="657" cy="155" r="1.0" fill="#800e02"/><circle cx="612" cy="145" r="1.2" fill="#901004"/><circle cx="612" cy="147" r="1.0" fill="#800e02"/><circle cx="611" cy="146" r="1.5" fill="#b01606"/><circle cx="618" cy="147" r="1.0" fill="#c01806"/><circle cx="612" cy="145" r="1.0" fill="#800e02"/><circle cx="649" cy="128" r="1.0" fill="#800e02"/><circle cx="660" cy="75" r="1.0" fill="#d01c06"/><circle cx="661" cy="77" r="0.6" fill="#c01806"/><circle cx="659" cy="76" r="0.8" fill="#800e02"/><circle cx="562" cy="91" r="1.0" fill="#f02a0c"/><circle cx="618" cy="170" r="1.5" fill="#d01c06"/><circle cx="617" cy="172" r="1.5" fill="#800e02"/><circle cx="619" cy="167" r="1.0" fill="#c01806"/><circle cx="690" cy="140" r="1.5" fill="#d01c06"/><circle cx="688" cy="144" r="1.0" fill="#800e02"/><circle cx="689" cy="140" r="0.8" fill="#800e02"/><circle cx="675" cy="144" r="0.8" fill="#800e02"/><circle cx="677" cy="143" r="1.0" fill="#901004"/><circle cx="676" cy="145" r="0.6" fill="#f02a0c"/><circle cx="626" cy="173" r="1.5" fill="#b01606"/><circle cx="678" cy="161" r="1.2" fill="#c01806"/><circle cx="676" cy="163" r="0.8" fill="#d01c06"/><circle cx="678" cy="162" r="1.5" fill="#f02a0c"/><circle cx="591" cy="97" r="0.6" fill="#f02a0c"/><circle cx="590" cy="98" r="1.0" fill="#800e02"/><circle cx="660" cy="132" r="0.8" fill="#c01806"/><circle cx="591" cy="105" r="0.6" fill="#d01c06"/><circle cx="592" cy="103" r="1.2" fill="#f02a0c"/><circle cx="576" cy="93" r="0.8" fill="#800e02"/><circle cx="576" cy="93" r="1.0" fill="#c01806"/><circle cx="577" cy="94" r="0.8" fill="#d01c06"/><circle cx="630" cy="117" r="0.6" fill="#f02a0c"/><circle cx="628" cy="118" r="0.6" fill="#b01606"/><circle cx="629" cy="119" r="1.5" fill="#c01806"/><circle cx="628" cy="117" r="0.8" fill="#901004"/><circle cx="631" cy="118" r="0.8" fill="#d01c06"/><circle cx="614" cy="184" r="0.8" fill="#d01c06"/><circle cx="613" cy="182" r="0.8" fill="#b01606"/><circle cx="612" cy="186" r="0.6" fill="#f02a0c"/><circle cx="650" cy="179" r="0.6" fill="#c01806"/><circle cx="652" cy="177" r="0.6" fill="#b01606"/><circle cx="649" cy="176" r="1.2" fill="#b01606"/><circle cx="648" cy="177" r="0.8" fill="#d01c06"/><circle cx="649" cy="176" r="1.0" fill="#f02a0c"/><circle cx="659" cy="178" r="1.5" fill="#c01806"/><circle cx="657" cy="176" r="0.6" fill="#c01806"/><circle cx="657" cy="176" r="0.6" fill="#b01606"/><circle cx="656" cy="177" r="1.0" fill="#c01806"/><circle cx="659" cy="177" r="1.2" fill="#901004"/><circle cx="615" cy="163" r="0.8" fill="#800e02"/><circle cx="614" cy="162" r="0.6" fill="#b01606"/><circle cx="638" cy="91" r="1.5" fill="#800e02"/><circle cx="634" cy="91" r="1.5" fill="#b01606"/><circle cx="638" cy="90" r="1.0" fill="#800e02"/><circle cx="638" cy="95" r="1.0" fill="#901004"/><circle cx="637" cy="91" r="0.8" fill="#b01606"/><circle cx="646" cy="118" r="1.2" fill="#800e02"/><circle cx="650" cy="118" r="0.6" fill="#b01606"/><circle cx="649" cy="114" r="0.8" fill="#901004"/><circle cx="622" cy="76" r="1.0" fill="#800e02"/><circle cx="622" cy="80" r="0.8" fill="#b01606"/><circle cx="617" cy="80" r="1.0" fill="#f02a0c"/><circle cx="587" cy="103" r="0.8" fill="#b01606"/><circle cx="587" cy="107" r="0.8" fill="#b01606"/><circle cx="584" cy="106" r="1.5" fill="#800e02"/><circle cx="584" cy="106" r="1.0" fill="#c01806"/><circle cx="588" cy="106" r="0.8" fill="#f02a0c"/><circle cx="609" cy="164" r="0.6" fill="#b01606"/><circle cx="608" cy="164" r="1.5" fill="#800e02"/><circle cx="606" cy="162" r="1.0" fill="#c01806"/><circle cx="643" cy="165" r="1.2" fill="#800e02"/><circle cx="644" cy="166" r="1.2" fill="#d01c06"/><circle cx="645" cy="166" r="1.5" fill="#b01606"/><circle cx="647" cy="167" r="1.5" fill="#f02a0c"/><circle cx="647" cy="137" r="1.2" fill="#901004"/><circle cx="647" cy="141" r="0.6" fill="#c01806"/><circle cx="647" cy="140" r="1.2" fill="#d01c06"/><circle cx="648" cy="166" r="1.2" fill="#b01606"/><circle cx="637" cy="163" r="1.2" fill="#800e02"/><circle cx="638" cy="162" r="1.2" fill="#b01606"/><circle cx="638" cy="163" r="0.6" fill="#c01806"/><circle cx="559" cy="101" r="1.5" fill="#d01c06"/><circle cx="561" cy="102" r="1.0" fill="#901004"/><circle cx="563" cy="101" r="1.2" fill="#901004"/><circle cx="560" cy="103" r="1.2" fill="#800e02"/><circle cx="683" cy="116" r="0.6" fill="#800e02"/><circle cx="685" cy="116" r="1.0" fill="#c01806"/><circle cx="682" cy="115" r="0.6" fill="#d01c06"/><circle cx="682" cy="115" r="1.2" fill="#b01606"/><circle cx="684" cy="116" r="0.6" fill="#f02a0c"/><circle cx="566" cy="156" r="1.0" fill="#b01606"/><circle cx="568" cy="154" r="1.5" fill="#b01606"/><circle cx="570" cy="167" r="1.5" fill="#d01c06"/><circle cx="572" cy="166" r="0.6" fill="#c01806"/><circle cx="574" cy="165" r="1.2" fill="#c01806"/><circle cx="637" cy="77" r="0.8" fill="#b01606"/><circle cx="636" cy="79" r="1.0" fill="#c01806"/><circle cx="660" cy="109" r="0.8" fill="#901004"/><circle cx="660" cy="109" r="1.0" fill="#f02a0c"/><circle cx="662" cy="108" r="1.5" fill="#800e02"/><circle cx="604" cy="130" r="1.5" fill="#901004"/><circle cx="606" cy="127" r="0.8" fill="#d01c06"/><circle cx="607" cy="132" r="1.0" fill="#800e02"/><circle cx="608" cy="131" r="0.8" fill="#c01806"/><circle cx="605" cy="129" r="0.6" fill="#901004"/><circle cx="683" cy="148" r="1.2" fill="#800e02"/><circle cx="685" cy="145" r="1.0" fill="#f02a0c"/><circle cx="685" cy="146" r="0.6" fill="#f02a0c"/><circle cx="686" cy="149" r="0.8" fill="#901004"/><circle cx="653" cy="120" r="0.8" fill="#b01606"/><circle cx="651" cy="119" r="1.5" fill="#b01606"/><circle cx="686" cy="97" r="1.5" fill="#d01c06"/><circle cx="685" cy="96" r="0.8" fill="#c01806"/><circle cx="686" cy="95" r="1.0" fill="#800e02"/><circle cx="630" cy="127" r="1.2" fill="#800e02"/><circle cx="628" cy="128" r="0.6" fill="#800e02"/><circle cx="629" cy="129" r="1.2" fill="#d01c06"/><circle cx="631" cy="126" r="1.0" fill="#c01806"/><circle cx="627" cy="126" r="0.8" fill="#901004"/><circle cx="655" cy="99" r="0.8" fill="#d01c06"/><circle cx="654" cy="97" r="0.6" fill="#f02a0c"/><circle cx="654" cy="99" r="0.8" fill="#c01806"/><circle cx="669" cy="73" r="0.8" fill="#b01606"/><circle cx="668" cy="74" r="0.6" fill="#800e02"/><circle cx="666" cy="71" r="1.2" fill="#c01806"/><circle cx="589" cy="126" r="1.0" fill="#c01806"/><circle cx="590" cy="125" r="0.6" fill="#c01806"/><circle cx="591" cy="126" r="1.2" fill="#b01606"/><circle cx="588" cy="127" r="1.0" fill="#901004"/><circle cx="607" cy="68" r="1.5" fill="#c01806"/><circle cx="606" cy="65" r="0.6" fill="#b01606"/><circle cx="607" cy="64" r="1.5" fill="#c01806"/><circle cx="584" cy="89" r="1.0" fill="#f02a0c"/><circle cx="585" cy="88" r="1.2" fill="#901004"/><circle cx="603" cy="180" r="1.5" fill="#901004"/><circle cx="601" cy="181" r="1.2" fill="#b01606"/><circle cx="602" cy="183" r="1.0" fill="#c01806"/><circle cx="603" cy="181" r="1.5" fill="#c01806"/><circle cx="594" cy="62" r="0.8" fill="#800e02"/><circle cx="570" cy="158" r="1.2" fill="#800e02"/><circle cx="570" cy="158" r="0.8" fill="#b01606"/><circle cx="568" cy="159" r="0.6" fill="#b01606"/><circle cx="659" cy="156" r="0.6" fill="#c01806"/><circle cx="624" cy="168" r="1.2" fill="#800e02"/><circle cx="622" cy="170" r="1.2" fill="#800e02"/><circle cx="585" cy="155" r="1.5" fill="#b01606"/><circle cx="633" cy="124" r="0.6" fill="#901004"/><circle cx="635" cy="125" r="1.0" fill="#c01806"/><circle cx="637" cy="127" r="1.2" fill="#f02a0c"/><circle cx="633" cy="127" r="1.2" fill="#d01c06"/><circle cx="634" cy="125" r="1.2" fill="#c01806"/><circle cx="615" cy="162" r="1.0" fill="#b01606"/><circle cx="612" cy="162" r="0.6" fill="#b01606"/><circle cx="616" cy="163" r="1.5" fill="#c01806"/><circle cx="650" cy="100" r="1.0" fill="#d01c06"/><circle cx="631" cy="163" r="0.8" fill="#d01c06"/><circle cx="630" cy="166" r="1.0" fill="#d01c06"/><circle cx="630" cy="166" r="1.5" fill="#b01606"/><circle cx="585" cy="127" r="1.0" fill="#800e02"/><circle cx="587" cy="127" r="1.5" fill="#f02a0c"/><circle cx="588" cy="126" r="0.8" fill="#b01606"/><circle cx="586" cy="127" r="0.8" fill="#901004"/><circle cx="648" cy="79" r="1.0" fill="#800e02"/><circle cx="648" cy="77" r="1.0" fill="#901004"/><circle cx="651" cy="78" r="1.0" fill="#d01c06"/><circle cx="622" cy="178" r="1.0" fill="#901004"/><circle cx="624" cy="181" r="1.2" fill="#f02a0c"/><circle cx="619" cy="122" r="1.5" fill="#b01606"/><circle cx="621" cy="123" r="1.0" fill="#d01c06"/><circle cx="621" cy="120" r="0.6" fill="#800e02"/><circle cx="634" cy="101" r="0.6" fill="#c01806"/><circle cx="572" cy="166" r="0.6" fill="#c01806"/><circle cx="573" cy="168" r="1.5" fill="#f02a0c"/><circle cx="573" cy="164" r="1.2" fill="#d01c06"/><circle cx="575" cy="164" r="1.0" fill="#d01c06"/><circle cx="662" cy="92" r="1.0" fill="#c01806"/><circle cx="663" cy="92" r="1.5" fill="#800e02"/><circle cx="663" cy="93" r="1.2" fill="#d01c06"/><circle cx="616" cy="120" r="0.8" fill="#800e02"/><circle cx="617" cy="118" r="0.6" fill="#d01c06"/><circle cx="639" cy="163" r="0.8" fill="#b01606"/><circle cx="638" cy="160" r="1.0" fill="#f02a0c"/><circle cx="637" cy="162" r="0.6" fill="#b01606"/><circle cx="584" cy="92" r="1.5" fill="#800e02"/><circle cx="587" cy="87" r="1.0" fill="#c01806"/><circle cx="585" cy="89" r="1.2" fill="#901004"/><circle cx="583" cy="88" r="0.6" fill="#c01806"/><circle cx="585" cy="93" r="0.8" fill="#c01806"/><circle cx="595" cy="95" r="1.2" fill="#f02a0c"/><circle cx="597" cy="92" r="0.8" fill="#f02a0c"/><circle cx="597" cy="93" r="1.0" fill="#d01c06"/><circle cx="651" cy="124" r="0.6" fill="#800e02"/><circle cx="651" cy="125" r="0.6" fill="#f02a0c"/><circle cx="679" cy="168" r="0.8" fill="#800e02"/><circle cx="680" cy="168" r="0.6" fill="#d01c06"/><circle cx="679" cy="168" r="1.5" fill="#b01606"/><circle cx="681" cy="168" r="0.8" fill="#901004"/><circle cx="681" cy="167" r="1.2" fill="#c01806"/><circle cx="643" cy="186" r="1.0" fill="#b01606"/><circle cx="646" cy="190" r="1.2" fill="#f02a0c"/><circle cx="647" cy="190" r="1.5" fill="#d01c06"/><circle cx="646" cy="185" r="0.8" fill="#c01806"/><circle cx="629" cy="149" r="1.0" fill="#f02a0c"/><circle cx="629" cy="149" r="1.2" fill="#f02a0c"/><circle cx="630" cy="149" r="1.5" fill="#c01806"/><circle cx="629" cy="147" r="1.5" fill="#b01606"/><circle cx="631" cy="152" r="1.5" fill="#b01606"/><circle cx="598" cy="163" r="1.2" fill="#800e02"/><circle cx="600" cy="164" r="0.6" fill="#800e02"/><circle cx="598" cy="161" r="1.0" fill="#b01606"/><circle cx="598" cy="161" r="1.2" fill="#f02a0c"/><circle cx="594" cy="77" r="1.5" fill="#b01606"/><circle cx="595" cy="78" r="0.8" fill="#b01606"/><circle cx="596" cy="81" r="1.2" fill="#901004"/><circle cx="653" cy="189" r="0.6" fill="#c01806"/><circle cx="649" cy="189" r="1.2" fill="#800e02"/><circle cx="615" cy="104" r="1.0" fill="#b01606"/><circle cx="616" cy="107" r="1.0" fill="#901004"/><circle cx="569" cy="192" r="1.0" fill="#800e02"/><circle cx="569" cy="192" r="1.5" fill="#c01806"/><circle cx="569" cy="192" r="1.5" fill="#f02a0c"/><circle cx="570" cy="193" r="1.0" fill="#800e02"/><circle cx="634" cy="188" r="0.6" fill="#800e02"/><circle cx="634" cy="193" r="0.8" fill="#b01606"/><circle cx="634" cy="192" r="1.0" fill="#c01806"/><circle cx="646" cy="96" r="0.8" fill="#f02a0c"/><circle cx="647" cy="98" r="0.6" fill="#d01c06"/><circle cx="645" cy="98" r="0.6" fill="#b01606"/><circle cx="647" cy="99" r="1.5" fill="#b01606"/><circle cx="655" cy="128" r="1.5" fill="#800e02"/><circle cx="656" cy="125" r="1.5" fill="#b01606"/><circle cx="660" cy="124" r="1.2" fill="#f02a0c"/><circle cx="661" cy="125" r="1.5" fill="#901004"/><circle cx="659" cy="127" r="1.5" fill="#c01806"/><circle cx="679" cy="87" r="0.6" fill="#901004"/><circle cx="679" cy="86" r="0.8" fill="#b01606"/><circle cx="681" cy="86" r="1.0" fill="#800e02"/><circle cx="677" cy="87" r="1.5" fill="#b01606"/><circle cx="679" cy="85" r="0.6" fill="#c01806"/><circle cx="642" cy="126" r="1.5" fill="#901004"/><circle cx="640" cy="130" r="0.8" fill="#c01806"/><circle cx="643" cy="128" r="1.2" fill="#c01806"/><circle cx="604" cy="108" r="0.6" fill="#c01806"/><circle cx="670" cy="106" r="0.6" fill="#c01806"/><circle cx="598" cy="188" r="1.5" fill="#901004"/><circle cx="595" cy="186" r="1.5" fill="#f02a0c"/><circle cx="596" cy="187" r="1.2" fill="#800e02"/><circle cx="633" cy="121" r="1.2" fill="#b01606"/><circle cx="631" cy="124" r="0.8" fill="#800e02"/><circle cx="630" cy="120" r="1.2" fill="#901004"/><circle cx="628" cy="117" r="1.0" fill="#d01c06"/><circle cx="629" cy="119" r="1.0" fill="#b01606"/><circle cx="629" cy="117" r="1.0" fill="#901004"/><circle cx="630" cy="119" r="0.8" fill="#800e02"/><circle cx="607" cy="163" r="0.8" fill="#d01c06"/><circle cx="605" cy="161" r="0.8" fill="#d01c06"/><circle cx="606" cy="165" r="1.5" fill="#901004"/><circle cx="606" cy="164" r="0.6" fill="#800e02"/><circle cx="607" cy="163" r="0.6" fill="#c01806"/><circle cx="659" cy="88" r="1.0" fill="#f02a0c"/><circle cx="682" cy="119" r="1.5" fill="#901004"/><circle cx="679" cy="122" r="0.8" fill="#b01606"/><circle cx="679" cy="120" r="1.5" fill="#b01606"/><circle cx="679" cy="121" r="0.8" fill="#f02a0c"/><circle cx="589" cy="81" r="0.6" fill="#b01606"/><circle cx="631" cy="75" r="1.0" fill="#901004"/><circle cx="630" cy="73" r="1.5" fill="#901004"/><circle cx="631" cy="75" r="1.5" fill="#901004"/><circle cx="630" cy="75" r="0.8" fill="#f02a0c"/><circle cx="630" cy="72" r="1.2" fill="#901004"/><circle cx="668" cy="129" r="1.5" fill="#800e02"/><circle cx="668" cy="129" r="1.0" fill="#d01c06"/><circle cx="665" cy="128" r="0.8" fill="#d01c06"/><circle cx="627" cy="100" r="0.8" fill="#f02a0c"/><circle cx="621" cy="98" r="1.5" fill="#c01806"/><circle cx="625" cy="96" r="1.0" fill="#901004"/><circle cx="623" cy="97" r="1.2" fill="#b01606"/><circle cx="625" cy="98" r="1.0" fill="#f02a0c"/><circle cx="611" cy="188" r="1.0" fill="#901004"/><circle cx="607" cy="188" r="1.0" fill="#901004"/><circle cx="609" cy="186" r="1.5" fill="#d01c06"/><circle cx="607" cy="185" r="1.5" fill="#d01c06"/><circle cx="610" cy="186" r="1.0" fill="#800e02"/><circle cx="672" cy="179" r="0.6" fill="#f02a0c"/><circle cx="673" cy="177" r="0.8" fill="#d01c06"/><circle cx="672" cy="176" r="1.2" fill="#800e02"/><circle cx="673" cy="178" r="0.6" fill="#b01606"/><circle cx="662" cy="118" r="1.0" fill="#800e02"/><circle cx="662" cy="119" r="1.0" fill="#f02a0c"/><circle cx="625" cy="171" r="1.2" fill="#f02a0c"/><circle cx="626" cy="175" r="0.8" fill="#800e02"/><circle cx="625" cy="174" r="0.6" fill="#d01c06"/><circle cx="597" cy="141" r="1.2" fill="#c01806"/><circle cx="600" cy="142" r="1.5" fill="#b01606"/><circle cx="623" cy="82" r="1.2" fill="#901004"/><circle cx="604" cy="137" r="0.8" fill="#d01c06"/><circle cx="603" cy="136" r="0.6" fill="#800e02"/><circle cx="619" cy="104" r="1.2" fill="#f02a0c"/><circle cx="620" cy="104" r="1.0" fill="#c01806"/><circle cx="615" cy="106" r="1.5" fill="#d01c06"/><circle cx="648" cy="138" r="1.5" fill="#f02a0c"/><circle cx="648" cy="138" r="1.0" fill="#901004"/><circle cx="649" cy="139" r="0.6" fill="#f02a0c"/><circle cx="650" cy="140" r="0.8" fill="#901004"/><circle cx="663" cy="67" r="0.8" fill="#901004"/><circle cx="651" cy="171" r="1.2" fill="#f02a0c"/><circle cx="650" cy="174" r="1.0" fill="#c01806"/><circle cx="651" cy="172" r="1.0" fill="#d01c06"/><circle cx="647" cy="172" r="0.8" fill="#d01c06"/><circle cx="645" cy="171" r="1.2" fill="#d01c06"/><circle cx="645" cy="174" r="0.8" fill="#c01806"/><circle cx="637" cy="177" r="1.0" fill="#800e02"/><circle cx="636" cy="177" r="1.2" fill="#d01c06"/><circle cx="636" cy="179" r="1.0" fill="#b01606"/><circle cx="635" cy="178" r="1.0" fill="#800e02"/><circle cx="615" cy="133" r="0.8" fill="#b01606"/><circle cx="616" cy="132" r="0.6" fill="#901004"/><circle cx="616" cy="135" r="0.6" fill="#d01c06"/><circle cx="616" cy="133" r="0.8" fill="#901004"/><circle cx="652" cy="119" r="1.0" fill="#f02a0c"/><circle cx="653" cy="116" r="0.6" fill="#d01c06"/><circle cx="656" cy="118" r="0.6" fill="#c01806"/><circle cx="580" cy="128" r="1.0" fill="#f02a0c"/><circle cx="579" cy="124" r="0.8" fill="#f02a0c"/><circle cx="579" cy="123" r="0.6" fill="#d01c06"/><circle cx="603" cy="155" r="0.8" fill="#f02a0c"/><circle cx="600" cy="157" r="1.0" fill="#d01c06"/><circle cx="602" cy="155" r="1.5" fill="#c01806"/><circle cx="670" cy="179" r="0.8" fill="#901004"/><circle cx="609" cy="103" r="0.6" fill="#d01c06"/><circle cx="567" cy="147" r="1.0" fill="#c01806"/><circle cx="569" cy="149" r="0.6" fill="#b01606"/><circle cx="565" cy="146" r="1.5" fill="#d01c06"/><circle cx="567" cy="147" r="0.8" fill="#f02a0c"/><circle cx="569" cy="148" r="0.6" fill="#b01606"/><circle cx="570" cy="145" r="0.6" fill="#d01c06"/><circle cx="570" cy="147" r="1.5" fill="#800e02"/><circle cx="571" cy="145" r="1.2" fill="#800e02"/><circle cx="618" cy="156" r="0.8" fill="#901004"/><circle cx="618" cy="154" r="1.2" fill="#c01806"/><circle cx="606" cy="80" r="1.5" fill="#d01c06"/><circle cx="606" cy="80" r="1.2" fill="#901004"/><circle cx="609" cy="79" r="1.5" fill="#d01c06"/><circle cx="631" cy="168" r="1.0" fill="#c01806"/><circle cx="566" cy="180" r="1.5" fill="#f02a0c"/><circle cx="568" cy="177" r="1.5" fill="#901004"/><circle cx="569" cy="178" r="0.6" fill="#800e02"/><circle cx="619" cy="95" r="1.2" fill="#c01806"/><circle cx="620" cy="96" r="1.2" fill="#800e02"/><circle cx="619" cy="96" r="0.6" fill="#b01606"/><circle cx="619" cy="95" r="0.6" fill="#d01c06"/><circle cx="559" cy="170" r="1.5" fill="#800e02"/><circle cx="647" cy="81" r="1.5" fill="#901004"/><circle cx="648" cy="83" r="0.6" fill="#b01606"/><circle cx="648" cy="82" r="1.2" fill="#b01606"/><circle cx="604" cy="140" r="1.5" fill="#800e02"/><circle cx="605" cy="140" r="1.0" fill="#800e02"/><circle cx="605" cy="142" r="1.5" fill="#b01606"/><circle cx="615" cy="96" r="0.8" fill="#c01806"/><circle cx="616" cy="96" r="1.5" fill="#f02a0c"/><circle cx="615" cy="97" r="0.8" fill="#c01806"/><circle cx="613" cy="94" r="1.5" fill="#f02a0c"/><circle cx="614" cy="93" r="1.5" fill="#901004"/><circle cx="582" cy="114" r="0.6" fill="#d01c06"/><circle cx="585" cy="112" r="1.5" fill="#901004"/><circle cx="583" cy="112" r="1.5" fill="#f02a0c"/><circle cx="587" cy="112" r="1.5" fill="#901004"/><circle cx="585" cy="112" r="1.2" fill="#800e02"/><circle cx="588" cy="138" r="0.8" fill="#f02a0c"/><circle cx="590" cy="136" r="1.0" fill="#901004"/><circle cx="591" cy="138" r="1.2" fill="#b01606"/><circle cx="690" cy="101" r="0.6" fill="#c01806"/><circle cx="691" cy="103" r="0.6" fill="#901004"/><circle cx="690" cy="101" r="1.0" fill="#b01606"/><circle cx="689" cy="98" r="1.0" fill="#c01806"/><circle cx="687" cy="101" r="1.5" fill="#d01c06"/><circle cx="646" cy="99" r="0.8" fill="#901004"/><circle cx="649" cy="162" r="1.0" fill="#901004"/><circle cx="650" cy="163" r="0.8" fill="#800e02"/><circle cx="650" cy="163" r="1.2" fill="#d01c06"/><circle cx="639" cy="127" r="1.5" fill="#b01606"/><circle cx="637" cy="128" r="1.5" fill="#f02a0c"/><circle cx="638" cy="129" r="1.0" fill="#901004"/><circle cx="593" cy="171" r="0.8" fill="#800e02"/><circle cx="595" cy="168" r="0.6" fill="#800e02"/><circle cx="596" cy="168" r="1.0" fill="#c01806"/><circle cx="604" cy="149" r="1.0" fill="#c01806"/><circle cx="648" cy="159" r="1.2" fill="#f02a0c"/><circle cx="647" cy="157" r="0.6" fill="#d01c06"/><circle cx="645" cy="160" r="0.8" fill="#d01c06"/><circle cx="647" cy="160" r="0.6" fill="#c01806"/><circle cx="647" cy="159" r="1.5" fill="#f02a0c"/><circle cx="669" cy="147" r="1.5" fill="#d01c06"/><circle cx="667" cy="147" r="0.8" fill="#c01806"/><circle cx="667" cy="145" r="0.8" fill="#d01c06"/><circle cx="671" cy="147" r="1.0" fill="#800e02"/><circle cx="669" cy="146" r="1.2" fill="#f02a0c"/><circle cx="643" cy="104" r="1.5" fill="#800e02"/><circle cx="644" cy="103" r="1.0" fill="#c01806"/><circle cx="644" cy="101" r="1.5" fill="#d01c06"/><circle cx="637" cy="161" r="0.8" fill="#800e02"/><circle cx="633" cy="162" r="0.6" fill="#b01606"/><circle cx="634" cy="160" r="1.5" fill="#d01c06"/><circle cx="599" cy="163" r="0.6" fill="#901004"/><circle cx="597" cy="163" r="0.8" fill="#800e02"/><circle cx="596" cy="162" r="1.5" fill="#901004"/><circle cx="573" cy="135" r="0.8" fill="#800e02"/><circle cx="575" cy="134" r="1.5" fill="#800e02"/><circle cx="574" cy="134" r="0.6" fill="#901004"/><circle cx="576" cy="136" r="1.0" fill="#b01606"/><circle cx="628" cy="185" r="1.2" fill="#800e02"/><circle cx="628" cy="188" r="1.0" fill="#b01606"/><circle cx="631" cy="186" r="1.2" fill="#d01c06"/><circle cx="590" cy="173" r="1.0" fill="#f02a0c"/><circle cx="593" cy="172" r="0.8" fill="#d01c06"/><circle cx="590" cy="173" r="0.6" fill="#b01606"/><circle cx="666" cy="162" r="1.2" fill="#f02a0c"/><circle cx="664" cy="162" r="1.0" fill="#901004"/><circle cx="684" cy="182" r="1.5" fill="#901004"/><circle cx="686" cy="176" r="1.2" fill="#b01606"/><circle cx="689" cy="177" r="0.8" fill="#d01c06"/><circle cx="685" cy="179" r="0.8" fill="#b01606"/><circle cx="685" cy="176" r="1.5" fill="#800e02"/><circle cx="687" cy="194" r="0.8" fill="#f02a0c"/><circle cx="690" cy="192" r="1.0" fill="#f02a0c"/><circle cx="686" cy="192" r="0.8" fill="#c01806"/><circle cx="685" cy="192" r="0.8" fill="#901004"/><circle cx="686" cy="190" r="0.8" fill="#f02a0c"/><circle cx="628" cy="121" r="0.8" fill="#901004"/><circle cx="630" cy="124" r="0.6" fill="#d01c06"/><circle cx="647" cy="140" r="0.6" fill="#901004"/><circle cx="648" cy="140" r="1.2" fill="#901004"/><circle cx="644" cy="142" r="1.0" fill="#d01c06"/><circle cx="613" cy="81" r="1.5" fill="#c01806"/><circle cx="612" cy="82" r="0.8" fill="#c01806"/><circle cx="598" cy="128" r="0.6" fill="#800e02"/><circle cx="598" cy="127" r="1.5" fill="#f02a0c"/><circle cx="675" cy="79" r="1.2" fill="#f02a0c"/><circle cx="674" cy="80" r="0.8" fill="#b01606"/><circle cx="672" cy="81" r="1.0" fill="#f02a0c"/><circle cx="675" cy="82" r="0.8" fill="#d01c06"/><circle cx="678" cy="81" r="1.2" fill="#c01806"/><circle cx="645" cy="159" r="0.8" fill="#f02a0c"/><circle cx="646" cy="162" r="1.2" fill="#800e02"/><circle cx="646" cy="164" r="1.5" fill="#c01806"/><circle cx="611" cy="161" r="0.6" fill="#c01806"/><circle cx="615" cy="163" r="0.6" fill="#d01c06"/><circle cx="612" cy="162" r="0.6" fill="#c01806"/><circle cx="612" cy="163" r="0.6" fill="#d01c06"/><circle cx="610" cy="76" r="1.0" fill="#f02a0c"/><circle cx="613" cy="75" r="0.6" fill="#800e02"/><circle cx="612" cy="74" r="1.2" fill="#b01606"/><circle cx="606" cy="121" r="1.5" fill="#800e02"/><circle cx="606" cy="121" r="1.0" fill="#f02a0c"/><circle cx="608" cy="122" r="0.8" fill="#f02a0c"/><circle cx="608" cy="122" r="0.8" fill="#800e02"/><circle cx="607" cy="121" r="1.2" fill="#800e02"/><circle cx="673" cy="76" r="1.5" fill="#c01806"/><circle cx="672" cy="74" r="1.2" fill="#b01606"/><circle cx="671" cy="71" r="1.5" fill="#800e02"/><circle cx="611" cy="87" r="0.6" fill="#f02a0c"/><circle cx="610" cy="89" r="1.2" fill="#901004"/><circle cx="671" cy="126" r="0.8" fill="#b01606"/><circle cx="669" cy="122" r="1.2" fill="#f02a0c"/><circle cx="671" cy="121" r="0.6" fill="#c01806"/><circle cx="671" cy="122" r="1.5" fill="#800e02"/><circle cx="669" cy="123" r="0.6" fill="#c01806"/><circle cx="646" cy="142" r="1.0" fill="#c01806"/><circle cx="641" cy="140" r="0.8" fill="#b01606"/><circle cx="643" cy="143" r="1.0" fill="#b01606"/><circle cx="643" cy="142" r="1.5" fill="#c01806"/><circle cx="662" cy="95" r="0.6" fill="#f02a0c"/><circle cx="663" cy="94" r="1.0" fill="#c01806"/><circle cx="661" cy="92" r="1.5" fill="#c01806"/><circle cx="635" cy="70" r="1.0" fill="#b01606"/><circle cx="634" cy="71" r="1.0" fill="#f02a0c"/><circle cx="585" cy="88" r="0.6" fill="#901004"/><circle cx="603" cy="83" r="1.0" fill="#901004"/><circle cx="600" cy="81" r="0.8" fill="#c01806"/><circle cx="603" cy="82" r="1.5" fill="#b01606"/><circle cx="662" cy="91" r="1.0" fill="#f02a0c"/><circle cx="661" cy="93" r="1.5" fill="#c01806"/><circle cx="664" cy="93" r="0.8" fill="#c01806"/><circle cx="579" cy="68" r="1.2" fill="#f02a0c"/><circle cx="582" cy="65" r="0.8" fill="#800e02"/><circle cx="581" cy="69" r="0.6" fill="#b01606"/><circle cx="579" cy="69" r="0.8" fill="#c01806"/><circle cx="626" cy="163" r="1.5" fill="#800e02"/><circle cx="628" cy="164" r="1.0" fill="#901004"/><circle cx="628" cy="161" r="1.5" fill="#c01806"/><circle cx="661" cy="130" r="1.0" fill="#901004"/><circle cx="659" cy="132" r="0.6" fill="#d01c06"/><circle cx="662" cy="133" r="1.2" fill="#f02a0c"/><circle cx="660" cy="178" r="1.2" fill="#c01806"/><circle cx="619" cy="116" r="0.6" fill="#c01806"/><circle cx="621" cy="118" r="1.0" fill="#c01806"/><circle cx="620" cy="115" r="1.0" fill="#901004"/><circle cx="595" cy="147" r="0.6" fill="#901004"/><circle cx="616" cy="141" r="1.5" fill="#c01806"/><circle cx="616" cy="145" r="1.0" fill="#800e02"/><circle cx="619" cy="142" r="1.0" fill="#f02a0c"/><circle cx="650" cy="177" r="1.2" fill="#901004"/><circle cx="659" cy="159" r="1.0" fill="#b01606"/><circle cx="660" cy="156" r="1.2" fill="#c01806"/><circle cx="619" cy="89" r="0.8" fill="#d01c06"/><circle cx="620" cy="117" r="1.5" fill="#901004"/><circle cx="618" cy="117" r="0.6" fill="#c01806"/><circle cx="618" cy="117" r="0.6" fill="#f02a0c"/><circle cx="614" cy="150" r="0.6" fill="#901004"/><circle cx="616" cy="151" r="1.5" fill="#b01606"/><circle cx="613" cy="154" r="0.6" fill="#c01806"/><circle cx="656" cy="171" r="1.0" fill="#800e02"/><circle cx="656" cy="171" r="0.8" fill="#901004"/><circle cx="655" cy="173" r="1.2" fill="#800e02"/><circle cx="656" cy="172" r="1.0" fill="#b01606"/><circle cx="657" cy="172" r="1.5" fill="#b01606"/><circle cx="634" cy="137" r="1.0" fill="#d01c06"/><circle cx="638" cy="136" r="1.5" fill="#d01c06"/><circle cx="576" cy="110" r="1.0" fill="#c01806"/><circle cx="573" cy="109" r="1.2" fill="#800e02"/><circle cx="657" cy="179" r="1.2" fill="#f02a0c"/><circle cx="633" cy="87" r="1.2" fill="#c01806"/><circle cx="634" cy="91" r="0.8" fill="#800e02"/><circle cx="588" cy="75" r="1.2" fill="#c01806"/><circle cx="589" cy="78" r="1.2" fill="#b01606"/><circle cx="586" cy="76" r="1.2" fill="#f02a0c"/><circle cx="588" cy="77" r="1.5" fill="#901004"/><circle cx="589" cy="75" r="1.0" fill="#901004"/><circle cx="606" cy="165" r="0.6" fill="#901004"/><circle cx="604" cy="165" r="1.0" fill="#901004"/><circle cx="606" cy="164" r="0.6" fill="#f02a0c"/><circle cx="665" cy="175" r="0.6" fill="#901004"/><circle cx="663" cy="176" r="1.2" fill="#d01c06"/><circle cx="663" cy="175" r="1.2" fill="#f02a0c"/><circle cx="665" cy="176" r="1.5" fill="#f02a0c"/><circle cx="665" cy="174" r="1.0" fill="#c01806"/><circle cx="666" cy="147" r="0.6" fill="#800e02"/><circle cx="668" cy="144" r="1.2" fill="#b01606"/><circle cx="665" cy="144" r="1.5" fill="#b01606"/><circle cx="666" cy="144" r="1.2" fill="#b01606"/><circle cx="664" cy="143" r="1.5" fill="#f02a0c"/><circle cx="559" cy="187" r="0.6" fill="#d01c06"/><circle cx="563" cy="185" r="0.6" fill="#d01c06"/><circle cx="561" cy="186" r="1.0" fill="#f02a0c"/><circle cx="592" cy="85" r="1.0" fill="#901004"/><circle cx="591" cy="84" r="1.0" fill="#f02a0c"/><circle cx="593" cy="82" r="0.6" fill="#c01806"/><circle cx="597" cy="86" r="1.2" fill="#d01c06"/><circle cx="676" cy="139" r="0.6" fill="#b01606"/><circle cx="672" cy="136" r="1.0" fill="#b01606"/><circle cx="675" cy="136" r="0.8" fill="#f02a0c"/><circle cx="655" cy="89" r="1.2" fill="#f02a0c"/><circle cx="655" cy="91" r="0.8" fill="#f02a0c"/><circle cx="658" cy="92" r="1.0" fill="#f02a0c"/><circle cx="659" cy="94" r="0.8" fill="#d01c06"/><circle cx="659" cy="90" r="0.8" fill="#800e02"/><circle cx="601" cy="108" r="0.8" fill="#b01606"/><circle cx="605" cy="113" r="1.2" fill="#800e02"/><circle cx="602" cy="110" r="0.8" fill="#f02a0c"/><circle cx="658" cy="139" r="1.2" fill="#901004"/><circle cx="661" cy="140" r="0.6" fill="#c01806"/><circle cx="658" cy="138" r="1.5" fill="#901004"/><circle cx="659" cy="139" r="1.0" fill="#b01606"/><circle cx="563" cy="81" r="0.6" fill="#c01806"/><circle cx="648" cy="98" r="1.5" fill="#901004"/><circle cx="646" cy="98" r="1.5" fill="#b01606"/><circle cx="647" cy="100" r="0.6" fill="#800e02"/><circle cx="620" cy="121" r="1.5" fill="#b01606"/><circle cx="624" cy="120" r="0.6" fill="#f02a0c"/><circle cx="619" cy="122" r="1.5" fill="#800e02"/><circle cx="621" cy="122" r="1.0" fill="#901004"/><circle cx="623" cy="123" r="1.5" fill="#800e02"/><circle cx="657" cy="75" r="0.6" fill="#800e02"/><circle cx="657" cy="77" r="0.6" fill="#800e02"/><circle cx="660" cy="76" r="1.5" fill="#b01606"/><circle cx="595" cy="153" r="0.6" fill="#901004"/><circle cx="595" cy="155" r="1.0" fill="#901004"/><circle cx="596" cy="153" r="0.8" fill="#c01806"/><circle cx="587" cy="81" r="0.8" fill="#901004"/><circle cx="586" cy="79" r="0.8" fill="#c01806"/><circle cx="587" cy="79" r="0.6" fill="#d01c06"/><circle cx="584" cy="78" r="1.2" fill="#f02a0c"/><circle cx="586" cy="79" r="1.2" fill="#800e02"/><circle cx="582" cy="114" r="1.0" fill="#b01606"/><circle cx="580" cy="111" r="0.6" fill="#b01606"/><circle cx="582" cy="114" r="1.0" fill="#f02a0c"/><circle cx="581" cy="110" r="1.5" fill="#d01c06"/><circle cx="580" cy="114" r="1.2" fill="#901004"/><circle cx="623" cy="174" r="1.0" fill="#f02a0c"/><circle cx="623" cy="175" r="1.5" fill="#800e02"/><circle cx="562" cy="187" r="1.0" fill="#f02a0c"/><circle cx="636" cy="138" r="1.0" fill="#901004"/><circle cx="634" cy="140" r="1.5" fill="#f02a0c"/><circle cx="632" cy="139" r="0.8" fill="#800e02"/><circle cx="633" cy="137" r="1.5" fill="#901004"/><circle cx="601" cy="169" r="1.5" fill="#b01606"/><circle cx="600" cy="168" r="0.6" fill="#f02a0c"/><circle cx="601" cy="170" r="1.2" fill="#901004"/><circle cx="601" cy="171" r="0.8" fill="#b01606"/><circle cx="601" cy="170" r="1.5" fill="#800e02"/><circle cx="671" cy="93" r="0.6" fill="#b01606"/><circle cx="670" cy="94" r="1.5" fill="#d01c06"/><circle cx="627" cy="114" r="1.2" fill="#800e02"/><circle cx="601" cy="104" r="1.0" fill="#f02a0c"/><circle cx="627" cy="75" r="1.0" fill="#901004"/><circle cx="626" cy="77" r="0.6" fill="#f02a0c"/><circle cx="622" cy="80" r="1.0" fill="#901004"/><circle cx="626" cy="77" r="0.8" fill="#c01806"/><circle cx="624" cy="78" r="0.6" fill="#d01c06"/><circle cx="678" cy="108" r="0.6" fill="#f02a0c"/><circle cx="677" cy="108" r="0.6" fill="#b01606"/><circle cx="677" cy="108" r="1.2" fill="#b01606"/><circle cx="678" cy="108" r="0.6" fill="#b01606"/><circle cx="665" cy="172" r="1.0" fill="#f02a0c"/><circle cx="665" cy="171" r="1.2" fill="#f02a0c"/><circle cx="664" cy="173" r="0.6" fill="#c01806"/><circle cx="666" cy="173" r="1.2" fill="#b01606"/><circle cx="663" cy="171" r="1.0" fill="#901004"/><circle cx="577" cy="88" r="0.6" fill="#901004"/><circle cx="574" cy="87" r="0.6" fill="#f02a0c"/><circle cx="577" cy="87" r="0.8" fill="#d01c06"/><circle cx="574" cy="87" r="0.8" fill="#901004"/><circle cx="576" cy="85" r="1.0" fill="#f02a0c"/><circle cx="659" cy="149" r="0.8" fill="#d01c06"/><circle cx="661" cy="130" r="1.5" fill="#d01c06"/><circle cx="656" cy="124" r="1.0" fill="#f02a0c"/><circle cx="656" cy="121" r="1.2" fill="#b01606"/><circle cx="659" cy="122" r="0.6" fill="#f02a0c"/><circle cx="633" cy="149" r="1.5" fill="#f02a0c"/><circle cx="595" cy="67" r="1.5" fill="#d01c06"/><circle cx="595" cy="68" r="0.8" fill="#f02a0c"/><circle cx="593" cy="67" r="1.5" fill="#b01606"/><circle cx="594" cy="71" r="0.6" fill="#d01c06"/><circle cx="592" cy="66" r="0.6" fill="#f02a0c"/><circle cx="600" cy="124" r="0.6" fill="#b01606"/><circle cx="596" cy="123" r="0.8" fill="#b01606"/><circle cx="599" cy="121" r="1.2" fill="#901004"/><circle cx="601" cy="124" r="1.5" fill="#d01c06"/><circle cx="669" cy="69" r="0.6" fill="#c01806"/><circle cx="668" cy="72" r="1.0" fill="#d01c06"/><circle cx="668" cy="71" r="1.0" fill="#c01806"/><circle cx="668" cy="146" r="0.6" fill="#d01c06"/><circle cx="673" cy="146" r="1.5" fill="#f02a0c"/><circle cx="621" cy="137" r="0.6" fill="#b01606"/><circle cx="619" cy="137" r="1.5" fill="#901004"/><circle cx="675" cy="120" r="1.2" fill="#800e02"/><circle cx="677" cy="123" r="1.0" fill="#c01806"/><circle cx="675" cy="122" r="0.8" fill="#c01806"/><circle cx="645" cy="105" r="1.2" fill="#c01806"/><circle cx="646" cy="104" r="1.0" fill="#901004"/><circle cx="642" cy="106" r="0.8" fill="#b01606"/><circle cx="648" cy="104" r="1.5" fill="#901004"/><circle cx="647" cy="102" r="1.5" fill="#d01c06"/><circle cx="677" cy="106" r="1.0" fill="#b01606"/><circle cx="678" cy="110" r="1.2" fill="#f02a0c"/><circle cx="678" cy="110" r="0.6" fill="#b01606"/><circle cx="624" cy="85" r="1.0" fill="#901004"/><circle cx="622" cy="82" r="1.2" fill="#b01606"/><circle cx="625" cy="85" r="1.5" fill="#d01c06"/><circle cx="625" cy="85" r="1.5" fill="#b01606"/><circle cx="626" cy="85" r="1.2" fill="#c01806"/><circle cx="615" cy="122" r="1.0" fill="#d01c06"/><circle cx="616" cy="120" r="0.6" fill="#d01c06"/><circle cx="616" cy="118" r="1.2" fill="#d01c06"/><circle cx="617" cy="122" r="0.6" fill="#f02a0c"/><circle cx="579" cy="114" r="0.8" fill="#f02a0c"/><circle cx="578" cy="113" r="0.8" fill="#800e02"/><circle cx="613" cy="107" r="0.8" fill="#b01606"/><circle cx="612" cy="107" r="0.8" fill="#b01606"/><circle cx="613" cy="106" r="0.8" fill="#901004"/><circle cx="664" cy="148" r="1.5" fill="#d01c06"/><circle cx="661" cy="148" r="0.8" fill="#b01606"/><circle cx="655" cy="149" r="0.8" fill="#c01806"/><circle cx="652" cy="151" r="0.6" fill="#800e02"/><circle cx="651" cy="152" r="0.8" fill="#901004"/><circle cx="671" cy="105" r="1.5" fill="#d01c06"/><circle cx="676" cy="105" r="1.2" fill="#b01606"/><circle cx="675" cy="107" r="1.5" fill="#b01606"/><circle cx="575" cy="108" r="0.6" fill="#f02a0c"/><circle cx="576" cy="109" r="0.6" fill="#800e02"/><circle cx="576" cy="105" r="0.8" fill="#901004"/><circle cx="651" cy="119" r="0.6" fill="#f02a0c"/><circle cx="650" cy="114" r="1.2" fill="#c01806"/><circle cx="650" cy="114" r="1.2" fill="#f02a0c"/><circle cx="664" cy="171" r="1.0" fill="#800e02"/><circle cx="661" cy="172" r="0.6" fill="#f02a0c"/><circle cx="667" cy="162" r="1.2" fill="#901004"/><circle cx="667" cy="160" r="1.5" fill="#d01c06"/><circle cx="668" cy="161" r="1.0" fill="#800e02"/><circle cx="669" cy="161" r="1.0" fill="#b01606"/><circle cx="668" cy="162" r="1.5" fill="#b01606"/><circle cx="626" cy="150" r="0.6" fill="#c01806"/><circle cx="627" cy="148" r="1.0" fill="#d01c06"/><circle cx="626" cy="148" r="1.5" fill="#800e02"/><circle cx="606" cy="108" r="1.0" fill="#901004"/><circle cx="607" cy="109" r="1.2" fill="#901004"/><circle cx="671" cy="75" r="1.2" fill="#c01806"/><circle cx="603" cy="164" r="1.5" fill="#800e02"/><circle cx="604" cy="163" r="1.2" fill="#c01806"/><circle cx="601" cy="167" r="0.6" fill="#d01c06"/><circle cx="604" cy="164" r="0.6" fill="#f02a0c"/><circle cx="607" cy="86" r="0.6" fill="#d01c06"/><circle cx="607" cy="85" r="1.2" fill="#d01c06"/><circle cx="658" cy="171" r="1.0" fill="#f02a0c"/><circle cx="662" cy="171" r="0.8" fill="#f02a0c"/><circle cx="614" cy="118" r="0.6" fill="#901004"/><circle cx="616" cy="117" r="0.8" fill="#c01806"/><circle cx="615" cy="116" r="1.0" fill="#800e02"/><circle cx="590" cy="120" r="1.5" fill="#c01806"/><circle cx="588" cy="122" r="0.8" fill="#901004"/><circle cx="590" cy="122" r="1.2" fill="#901004"/><circle cx="592" cy="121" r="0.6" fill="#d01c06"/><circle cx="588" cy="123" r="0.8" fill="#c01806"/><circle cx="657" cy="121" r="0.8" fill="#800e02"/><circle cx="656" cy="120" r="0.8" fill="#d01c06"/><circle cx="602" cy="174" r="1.5" fill="#d01c06"/><circle cx="598" cy="171" r="0.8" fill="#c01806"/><circle cx="669" cy="111" r="1.0" fill="#d01c06"/><circle cx="667" cy="112" r="0.8" fill="#c01806"/><circle cx="667" cy="114" r="1.2" fill="#f02a0c"/><circle cx="669" cy="108" r="1.0" fill="#d01c06"/><circle cx="671" cy="111" r="1.5" fill="#901004"/><circle cx="608" cy="131" r="1.0" fill="#c01806"/><circle cx="607" cy="131" r="1.2" fill="#901004"/><circle cx="608" cy="131" r="0.6" fill="#d01c06"/><circle cx="608" cy="132" r="0.6" fill="#f02a0c"/><circle cx="608" cy="132" r="1.0" fill="#b01606"/><circle cx="668" cy="171" r="1.5" fill="#c01806"/><circle cx="666" cy="173" r="1.0" fill="#d01c06"/><circle cx="668" cy="170" r="1.2" fill="#800e02"/><circle cx="595" cy="147" r="1.2" fill="#d01c06"/><circle cx="589" cy="148" r="1.5" fill="#b01606"/><circle cx="592" cy="147" r="0.8" fill="#800e02"/><circle cx="592" cy="147" r="1.0" fill="#b01606"/><circle cx="591" cy="149" r="1.2" fill="#c01806"/><circle cx="632" cy="78" r="1.2" fill="#f02a0c"/><circle cx="672" cy="102" r="1.2" fill="#800e02"/><circle cx="671" cy="99" r="1.5" fill="#c01806"/><circle cx="671" cy="100" r="1.2" fill="#c01806"/><circle cx="621" cy="110" r="1.2" fill="#b01606"/><circle cx="620" cy="109" r="1.0" fill="#f02a0c"/><circle cx="618" cy="110" r="1.5" fill="#d01c06"/><circle cx="681" cy="176" r="1.5" fill="#f02a0c"/><circle cx="683" cy="176" r="1.5" fill="#901004"/><circle cx="661" cy="79" r="0.6" fill="#b01606"/><circle cx="663" cy="81" r="1.2" fill="#b01606"/><circle cx="661" cy="77" r="1.2" fill="#d01c06"/><circle cx="669" cy="155" r="0.6" fill="#b01606"/><circle cx="668" cy="154" r="0.6" fill="#c01806"/><circle cx="667" cy="154" r="1.5" fill="#f02a0c"/><circle cx="567" cy="95" r="0.6" fill="#901004"/><circle cx="567" cy="96" r="1.0" fill="#d01c06"/><circle cx="568" cy="95" r="1.2" fill="#800e02"/><circle cx="630" cy="160" r="1.0" fill="#f02a0c"/><circle cx="628" cy="157" r="0.6" fill="#901004"/><circle cx="569" cy="100" r="1.5" fill="#d01c06"/><circle cx="573" cy="99" r="0.6" fill="#c01806"/><circle cx="573" cy="98" r="1.0" fill="#800e02"/><circle cx="564" cy="120" r="1.0" fill="#b01606"/><circle cx="563" cy="118" r="0.8" fill="#b01606"/><circle cx="565" cy="119" r="1.2" fill="#f02a0c"/><circle cx="619" cy="76" r="0.8" fill="#d01c06"/><circle cx="616" cy="76" r="1.5" fill="#c01806"/><circle cx="617" cy="73" r="1.5" fill="#800e02"/><circle cx="589" cy="78" r="1.2" fill="#f02a0c"/><circle cx="591" cy="80" r="0.8" fill="#b01606"/><circle cx="589" cy="81" r="1.0" fill="#d01c06"/><circle cx="591" cy="78" r="1.5" fill="#c01806"/><circle cx="640" cy="95" r="0.6" fill="#d01c06"/><circle cx="641" cy="95" r="0.8" fill="#901004"/><circle cx="640" cy="94" r="0.6" fill="#f02a0c"/><circle cx="646" cy="72" r="0.6" fill="#f02a0c"/><circle cx="646" cy="72" r="0.6" fill="#b01606"/><circle cx="646" cy="71" r="0.6" fill="#f02a0c"/><circle cx="646" cy="73" r="0.6" fill="#901004"/><circle cx="645" cy="71" r="0.6" fill="#c01806"/><circle cx="566" cy="132" r="1.0" fill="#b01606"/><circle cx="569" cy="134" r="1.0" fill="#c01806"/><circle cx="618" cy="150" r="1.5" fill="#d01c06"/><circle cx="620" cy="147" r="1.5" fill="#b01606"/><circle cx="618" cy="147" r="1.0" fill="#d01c06"/><circle cx="594" cy="63" r="0.8" fill="#c01806"/><circle cx="592" cy="62" r="1.5" fill="#d01c06"/><circle cx="588" cy="65" r="0.8" fill="#901004"/><circle cx="593" cy="63" r="1.5" fill="#d01c06"/><circle cx="607" cy="163" r="0.6" fill="#f02a0c"/><circle cx="604" cy="161" r="1.0" fill="#800e02"/><circle cx="603" cy="163" r="0.6" fill="#901004"/><circle cx="661" cy="162" r="1.5" fill="#800e02"/><circle cx="658" cy="165" r="1.2" fill="#d01c06"/><circle cx="659" cy="161" r="1.2" fill="#d01c06"/><circle cx="566" cy="134" r="1.0" fill="#d01c06"/><circle cx="583" cy="167" r="0.6" fill="#f02a0c"/><circle cx="648" cy="147" r="0.6" fill="#d01c06"/><circle cx="648" cy="148" r="0.6" fill="#800e02"/><circle cx="653" cy="145" r="0.6" fill="#901004"/><circle cx="565" cy="168" r="1.2" fill="#b01606"/><circle cx="566" cy="168" r="1.2" fill="#901004"/><circle cx="658" cy="85" r="1.2" fill="#901004"/><circle cx="656" cy="87" r="1.2" fill="#f02a0c"/><circle cx="657" cy="87" r="1.2" fill="#b01606"/><circle cx="659" cy="88" r="0.8" fill="#800e02"/><circle cx="658" cy="87" r="0.6" fill="#b01606"/><circle cx="659" cy="175" r="1.2" fill="#c01806"/><circle cx="661" cy="178" r="1.5" fill="#c01806"/><circle cx="662" cy="179" r="1.5" fill="#f02a0c"/><circle cx="575" cy="113" r="1.2" fill="#c01806"/><circle cx="574" cy="112" r="1.5" fill="#c01806"/><circle cx="577" cy="111" r="1.2" fill="#b01606"/><circle cx="654" cy="184" r="1.2" fill="#f02a0c"/><circle cx="657" cy="183" r="1.0" fill="#800e02"/><circle cx="657" cy="184" r="1.0" fill="#800e02"/><circle cx="679" cy="132" r="1.2" fill="#800e02"/><circle cx="678" cy="131" r="1.2" fill="#f02a0c"/><circle cx="679" cy="131" r="0.6" fill="#f02a0c"/><circle cx="650" cy="72" r="1.5" fill="#800e02"/><circle cx="652" cy="75" r="1.0" fill="#b01606"/><circle cx="654" cy="72" r="1.0" fill="#901004"/><circle cx="664" cy="134" r="1.0" fill="#f02a0c"/><circle cx="668" cy="136" r="1.0" fill="#f02a0c"/><circle cx="665" cy="137" r="0.8" fill="#d01c06"/><circle cx="665" cy="134" r="0.6" fill="#901004"/><circle cx="667" cy="136" r="1.5" fill="#901004"/><circle cx="635" cy="120" r="1.5" fill="#c01806"/><circle cx="604" cy="69" r="1.5" fill="#b01606"/><circle cx="606" cy="67" r="1.2" fill="#901004"/><circle cx="602" cy="66" r="0.6" fill="#800e02"/><circle cx="643" cy="112" r="1.0" fill="#d01c06"/><circle cx="641" cy="110" r="1.2" fill="#d01c06"/><circle cx="639" cy="110" r="0.6" fill="#c01806"/><circle cx="642" cy="111" r="1.0" fill="#c01806"/><circle cx="641" cy="111" r="0.6" fill="#800e02"/><circle cx="610" cy="139" r="0.6" fill="#c01806"/><circle cx="609" cy="137" r="0.8" fill="#901004"/><circle cx="609" cy="136" r="1.0" fill="#c01806"/><circle cx="609" cy="137" r="1.5" fill="#901004"/><circle cx="658" cy="140" r="1.5" fill="#f02a0c"/><circle cx="658" cy="137" r="0.6" fill="#800e02"/><circle cx="610" cy="149" r="1.2" fill="#d01c06"/><circle cx="609" cy="147" r="1.2" fill="#901004"/><circle cx="612" cy="149" r="1.5" fill="#f02a0c"/><circle cx="613" cy="148" r="0.6" fill="#c01806"/><circle cx="611" cy="151" r="0.8" fill="#d01c06"/><circle cx="573" cy="160" r="1.2" fill="#f02a0c"/><circle cx="572" cy="163" r="0.6" fill="#800e02"/><circle cx="573" cy="162" r="1.0" fill="#800e02"/><circle cx="574" cy="163" r="0.8" fill="#f02a0c"/><circle cx="573" cy="162" r="0.6" fill="#d01c06"/><circle cx="607" cy="138" r="1.2" fill="#f02a0c"/><circle cx="609" cy="137" r="0.8" fill="#901004"/><circle cx="610" cy="138" r="1.0" fill="#800e02"/><circle cx="594" cy="124" r="1.2" fill="#b01606"/><circle cx="595" cy="123" r="1.0" fill="#c01806"/><circle cx="592" cy="122" r="1.2" fill="#901004"/><circle cx="591" cy="119" r="1.2" fill="#800e02"/><circle cx="596" cy="187" r="1.5" fill="#b01606"/><circle cx="593" cy="185" r="1.5" fill="#901004"/><circle cx="575" cy="176" r="0.6" fill="#901004"/><circle cx="573" cy="179" r="1.2" fill="#800e02"/><circle cx="574" cy="174" r="0.8" fill="#d01c06"/><circle cx="650" cy="179" r="1.2" fill="#f02a0c"/><circle cx="604" cy="69" r="1.5" fill="#901004"/><circle cx="604" cy="69" r="1.5" fill="#f02a0c"/><circle cx="603" cy="70" r="1.0" fill="#d01c06"/><circle cx="674" cy="177" r="1.0" fill="#b01606"/><circle cx="674" cy="174" r="0.6" fill="#800e02"/><circle cx="674" cy="174" r="0.8" fill="#901004"/><circle cx="679" cy="149" r="1.0" fill="#800e02"/><circle cx="682" cy="150" r="1.2" fill="#f02a0c"/><circle cx="684" cy="148" r="1.0" fill="#901004"/><circle cx="683" cy="149" r="0.8" fill="#901004"/><circle cx="632" cy="111" r="1.2" fill="#800e02"/><circle cx="630" cy="114" r="1.2" fill="#b01606"/><circle cx="633" cy="142" r="1.2" fill="#f02a0c"/><circle cx="631" cy="141" r="1.0" fill="#800e02"/><circle cx="628" cy="146" r="0.6" fill="#d01c06"/><circle cx="627" cy="166" r="1.2" fill="#c01806"/><circle cx="627" cy="164" r="1.0" fill="#f02a0c"/><circle cx="627" cy="163" r="0.8" fill="#800e02"/><circle cx="626" cy="166" r="0.6" fill="#f02a0c"/><circle cx="628" cy="167" r="1.5" fill="#b01606"/><circle cx="569" cy="195" r="0.8" fill="#c01806"/><circle cx="615" cy="155" r="1.2" fill="#f02a0c"/><circle cx="618" cy="153" r="0.8" fill="#800e02"/><circle cx="616" cy="153" r="1.0" fill="#d01c06"/><circle cx="619" cy="154" r="1.2" fill="#f02a0c"/><circle cx="620" cy="153" r="0.8" fill="#b01606"/><circle cx="676" cy="166" r="0.8" fill="#b01606"/><circle cx="579" cy="85" r="0.8" fill="#b01606"/><circle cx="577" cy="84" r="1.0" fill="#d01c06"/><circle cx="579" cy="84" r="1.5" fill="#b01606"/><circle cx="651" cy="107" r="1.2" fill="#800e02"/><circle cx="643" cy="137" r="0.8" fill="#901004"/><circle cx="641" cy="138" r="0.8" fill="#f02a0c"/><circle cx="643" cy="134" r="1.0" fill="#800e02"/><circle cx="598" cy="134" r="0.8" fill="#b01606"/><circle cx="598" cy="135" r="1.5" fill="#f02a0c"/><circle cx="599" cy="133" r="1.2" fill="#b01606"/><circle cx="599" cy="134" r="1.0" fill="#800e02"/><circle cx="597" cy="134" r="1.2" fill="#800e02"/><circle cx="645" cy="158" r="0.6" fill="#c01806"/><circle cx="646" cy="159" r="0.8" fill="#f02a0c"/><circle cx="649" cy="156" r="1.5" fill="#800e02"/><circle cx="669" cy="138" r="1.5" fill="#c01806"/><circle cx="666" cy="140" r="1.0" fill="#d01c06"/><circle cx="671" cy="137" r="1.5" fill="#d01c06"/><circle cx="669" cy="139" r="1.0" fill="#f02a0c"/><circle cx="670" cy="139" r="1.5" fill="#f02a0c"/><circle cx="562" cy="68" r="0.8" fill="#f02a0c"/><circle cx="564" cy="65" r="1.0" fill="#f02a0c"/><circle cx="635" cy="149" r="1.0" fill="#c01806"/><circle cx="633" cy="152" r="1.0" fill="#800e02"/><circle cx="637" cy="149" r="0.8" fill="#c01806"/><circle cx="612" cy="147" r="0.8" fill="#d01c06"/><circle cx="614" cy="148" r="1.2" fill="#901004"/><circle cx="614" cy="149" r="0.6" fill="#f02a0c"/><circle cx="614" cy="148" r="1.5" fill="#f02a0c"/><circle cx="612" cy="148" r="0.8" fill="#b01606"/><circle cx="643" cy="102" r="0.8" fill="#d01c06"/><circle cx="641" cy="98" r="1.5" fill="#800e02"/><circle cx="639" cy="99" r="0.6" fill="#c01806"/><circle cx="623" cy="173" r="0.8" fill="#f02a0c"/><circle cx="620" cy="168" r="0.6" fill="#901004"/><circle cx="621" cy="169" r="1.2" fill="#901004"/><circle cx="619" cy="169" r="1.0" fill="#d01c06"/><circle cx="618" cy="128" r="1.2" fill="#f02a0c"/><circle cx="640" cy="103" r="0.6" fill="#901004"/><circle cx="640" cy="103" r="1.2" fill="#901004"/><circle cx="644" cy="102" r="1.5" fill="#d01c06"/><circle cx="638" cy="104" r="1.0" fill="#901004"/><circle cx="639" cy="101" r="1.5" fill="#c01806"/><circle cx="656" cy="179" r="0.8" fill="#f02a0c"/><circle cx="657" cy="180" r="0.8" fill="#f02a0c"/><circle cx="655" cy="177" r="0.8" fill="#b01606"/><circle cx="574" cy="111" r="1.0" fill="#800e02"/><circle cx="574" cy="111" r="0.6" fill="#901004"/><circle cx="574" cy="111" r="1.2" fill="#f02a0c"/><circle cx="599" cy="124" r="1.2" fill="#901004"/><circle cx="599" cy="123" r="1.2" fill="#b01606"/><circle cx="601" cy="125" r="1.2" fill="#800e02"/><circle cx="589" cy="72" r="1.2" fill="#c01806"/><circle cx="590" cy="73" r="1.0" fill="#f02a0c"/><circle cx="611" cy="146" r="1.0" fill="#d01c06"/><circle cx="611" cy="144" r="1.0" fill="#d01c06"/><circle cx="608" cy="145" r="0.6" fill="#c01806"/><circle cx="674" cy="82" r="1.5" fill="#f02a0c"/><circle cx="636" cy="105" r="1.5" fill="#901004"/><circle cx="633" cy="105" r="1.5" fill="#b01606"/><circle cx="636" cy="105" r="0.8" fill="#d01c06"/><circle cx="625" cy="131" r="1.0" fill="#901004"/><circle cx="622" cy="130" r="1.2" fill="#c01806"/><circle cx="624" cy="130" r="0.8" fill="#d01c06"/><circle cx="602" cy="66" r="1.0" fill="#800e02"/><circle cx="600" cy="65" r="0.6" fill="#f02a0c"/><circle cx="677" cy="150" r="1.2" fill="#800e02"/><circle cx="631" cy="174" r="1.5" fill="#800e02"/><circle cx="627" cy="176" r="1.5" fill="#901004"/><circle cx="628" cy="173" r="1.2" fill="#901004"/><circle cx="675" cy="160" r="0.6" fill="#b01606"/><circle cx="609" cy="115" r="0.8" fill="#f02a0c"/><circle cx="605" cy="114" r="1.2" fill="#800e02"/><circle cx="607" cy="114" r="0.6" fill="#901004"/><circle cx="606" cy="115" r="1.2" fill="#b01606"/><circle cx="609" cy="117" r="1.2" fill="#f02a0c"/><circle cx="585" cy="136" r="0.8" fill="#d01c06"/><circle cx="583" cy="139" r="1.2" fill="#b01606"/><circle cx="583" cy="137" r="1.2" fill="#f02a0c"/><circle cx="624" cy="163" r="1.5" fill="#901004"/><circle cx="626" cy="165" r="1.5" fill="#c01806"/><circle cx="624" cy="162" r="1.2" fill="#d01c06"/><circle cx="687" cy="115" r="1.5" fill="#901004"/><circle cx="686" cy="114" r="1.2" fill="#f02a0c"/><circle cx="688" cy="116" r="1.0" fill="#f02a0c"/><circle cx="687" cy="114" r="1.0" fill="#800e02"/><circle cx="687" cy="116" r="0.8" fill="#c01806"/><circle cx="601" cy="188" r="1.5" fill="#800e02"/><circle cx="602" cy="188" r="1.0" fill="#800e02"/><circle cx="583" cy="131" r="1.0" fill="#f02a0c"/><circle cx="585" cy="128" r="1.5" fill="#d01c06"/><circle cx="584" cy="133" r="1.2" fill="#d01c06"/><circle cx="585" cy="131" r="1.2" fill="#b01606"/><circle cx="585" cy="127" r="1.2" fill="#901004"/><circle cx="621" cy="124" r="0.6" fill="#901004"/><circle cx="621" cy="122" r="0.8" fill="#d01c06"/><circle cx="627" cy="106" r="1.2" fill="#b01606"/><circle cx="626" cy="105" r="0.8" fill="#f02a0c"/><circle cx="626" cy="107" r="1.0" fill="#b01606"/><circle cx="626" cy="104" r="0.8" fill="#800e02"/><circle cx="597" cy="106" r="0.6" fill="#f02a0c"/><circle cx="599" cy="103" r="0.6" fill="#b01606"/><circle cx="598" cy="105" r="0.6" fill="#c01806"/><circle cx="598" cy="107" r="0.6" fill="#d01c06"/><circle cx="629" cy="158" r="1.2" fill="#c01806"/><circle cx="625" cy="157" r="0.8" fill="#800e02"/><circle cx="627" cy="159" r="0.6" fill="#d01c06"/><circle cx="668" cy="111" r="0.6" fill="#d01c06"/><circle cx="666" cy="110" r="1.0" fill="#c01806"/><circle cx="666" cy="112" r="1.2" fill="#901004"/><circle cx="687" cy="140" r="1.5" fill="#f02a0c"/><circle cx="688" cy="140" r="1.2" fill="#f02a0c"/><circle cx="690" cy="139" r="1.5" fill="#800e02"/><circle cx="687" cy="141" r="0.8" fill="#b01606"/><circle cx="687" cy="139" r="0.6" fill="#b01606"/><circle cx="652" cy="158" r="0.8" fill="#f02a0c"/><circle cx="656" cy="155" r="0.8" fill="#c01806"/><circle cx="656" cy="155" r="1.5" fill="#901004"/><circle cx="619" cy="194" r="1.5" fill="#901004"/><circle cx="620" cy="191" r="1.0" fill="#b01606"/><circle cx="622" cy="190" r="1.5" fill="#d01c06"/><circle cx="659" cy="141" r="1.5" fill="#c01806"/><circle cx="661" cy="138" r="1.0" fill="#800e02"/><circle cx="660" cy="140" r="1.0" fill="#b01606"/><circle cx="662" cy="140" r="0.8" fill="#c01806"/><circle cx="662" cy="140" r="0.6" fill="#c01806"/><circle cx="635" cy="85" r="0.8" fill="#b01606"/><circle cx="637" cy="85" r="1.5" fill="#901004"/><circle cx="635" cy="87" r="1.2" fill="#c01806"/><circle cx="635" cy="85" r="1.0" fill="#901004"/><circle cx="639" cy="175" r="0.6" fill="#f02a0c"/><circle cx="639" cy="178" r="1.2" fill="#901004"/><circle cx="642" cy="175" r="1.5" fill="#c01806"/><circle cx="639" cy="172" r="1.5" fill="#c01806"/><circle cx="640" cy="177" r="1.5" fill="#800e02"/><circle cx="647" cy="64" r="0.8" fill="#b01606"/><circle cx="647" cy="67" r="1.0" fill="#f02a0c"/><circle cx="579" cy="156" r="1.2" fill="#b01606"/><circle cx="663" cy="187" r="1.2" fill="#d01c06"/><circle cx="587" cy="106" r="1.2" fill="#c01806"/><circle cx="583" cy="104" r="1.0" fill="#c01806"/><circle cx="584" cy="105" r="1.2" fill="#800e02"/><circle cx="627" cy="102" r="0.8" fill="#d01c06"/><circle cx="626" cy="104" r="1.2" fill="#d01c06"/><circle cx="629" cy="103" r="1.5" fill="#b01606"/><circle cx="679" cy="109" r="0.8" fill="#c01806"/><circle cx="676" cy="110" r="1.5" fill="#f02a0c"/><circle cx="679" cy="108" r="1.0" fill="#b01606"/><circle cx="678" cy="107" r="1.0" fill="#901004"/><circle cx="678" cy="109" r="0.8" fill="#d01c06"/><circle cx="657" cy="161" r="1.0" fill="#901004"/><circle cx="660" cy="162" r="1.2" fill="#b01606"/><circle cx="661" cy="160" r="0.6" fill="#f02a0c"/><circle cx="659" cy="159" r="1.2" fill="#901004"/><circle cx="647" cy="144" r="1.5" fill="#d01c06"/><circle cx="650" cy="142" r="1.2" fill="#f02a0c"/><circle cx="649" cy="143" r="1.0" fill="#b01606"/><circle cx="590" cy="136" r="0.8" fill="#f02a0c"/><circle cx="590" cy="137" r="1.2" fill="#800e02"/><circle cx="590" cy="137" r="0.8" fill="#800e02"/><circle cx="592" cy="137" r="1.0" fill="#c01806"/><circle cx="587" cy="158" r="0.8" fill="#c01806"/><circle cx="583" cy="156" r="1.5" fill="#c01806"/><circle cx="586" cy="158" r="0.6" fill="#b01606"/><circle cx="584" cy="155" r="0.6" fill="#901004"/><circle cx="586" cy="156" r="1.5" fill="#f02a0c"/><circle cx="605" cy="186" r="1.2" fill="#c01806"/><circle cx="591" cy="78" r="1.0" fill="#f02a0c"/><circle cx="606" cy="196" r="1.0" fill="#f02a0c"/><circle cx="608" cy="195" r="0.6" fill="#c01806"/><circle cx="596" cy="159" r="0.6" fill="#d01c06"/><circle cx="595" cy="159" r="0.8" fill="#b01606"/><circle cx="617" cy="96" r="0.6" fill="#901004"/><circle cx="615" cy="97" r="1.2" fill="#901004"/><circle cx="616" cy="99" r="0.6" fill="#b01606"/><circle cx="617" cy="98" r="1.5" fill="#d01c06"/><circle cx="583" cy="134" r="0.6" fill="#901004"/><circle cx="586" cy="135" r="1.2" fill="#b01606"/><circle cx="583" cy="134" r="0.8" fill="#b01606"/><circle cx="648" cy="79" r="0.6" fill="#d01c06"/><circle cx="650" cy="78" r="0.8" fill="#901004"/><circle cx="649" cy="79" r="1.5" fill="#d01c06"/><circle cx="633" cy="97" r="0.8" fill="#c01806"/><circle cx="639" cy="93" r="1.5" fill="#f02a0c"/><circle cx="630" cy="148" r="1.5" fill="#901004"/><circle cx="613" cy="159" r="1.2" fill="#901004"/><circle cx="610" cy="157" r="1.2" fill="#901004"/><circle cx="613" cy="158" r="1.5" fill="#901004"/><circle cx="615" cy="159" r="1.5" fill="#b01606"/><circle cx="612" cy="160" r="0.6" fill="#d01c06"/><circle cx="680" cy="116" r="1.2" fill="#d01c06"/><circle cx="678" cy="114" r="1.0" fill="#800e02"/><circle cx="683" cy="116" r="1.2" fill="#901004"/><circle cx="681" cy="120" r="1.0" fill="#d01c06"/><circle cx="679" cy="117" r="0.6" fill="#800e02"/><circle cx="685" cy="105" r="1.2" fill="#b01606"/><circle cx="687" cy="103" r="1.2" fill="#c01806"/><circle cx="677" cy="71" r="1.5" fill="#b01606"/><circle cx="678" cy="71" r="0.6" fill="#c01806"/><circle cx="680" cy="74" r="1.2" fill="#800e02"/><circle cx="681" cy="76" r="1.2" fill="#c01806"/><circle cx="677" cy="74" r="0.6" fill="#b01606"/><circle cx="628" cy="160" r="0.6" fill="#d01c06"/><circle cx="629" cy="157" r="1.0" fill="#d01c06"/><circle cx="630" cy="160" r="1.0" fill="#800e02"/><circle cx="679" cy="86" r="1.0" fill="#b01606"/><circle cx="678" cy="88" r="1.5" fill="#d01c06"/><circle cx="582" cy="189" r="1.2" fill="#b01606"/><circle cx="609" cy="128" r="1.5" fill="#d01c06"/><circle cx="609" cy="127" r="1.5" fill="#c01806"/><circle cx="611" cy="130" r="0.6" fill="#d01c06"/><circle cx="688" cy="186" r="1.5" fill="#800e02"/><circle cx="685" cy="186" r="0.6" fill="#800e02"/><circle cx="684" cy="185" r="1.5" fill="#f02a0c"/><circle cx="690" cy="99" r="0.6" fill="#901004"/><circle cx="631" cy="127" r="0.6" fill="#800e02"/><circle cx="628" cy="128" r="1.5" fill="#b01606"/><circle cx="630" cy="128" r="1.0" fill="#f02a0c"/><circle cx="670" cy="125" r="0.8" fill="#901004"/><circle cx="672" cy="126" r="0.6" fill="#800e02"/><circle cx="671" cy="127" r="0.6" fill="#d01c06"/><circle cx="671" cy="126" r="0.6" fill="#800e02"/><circle cx="574" cy="84" r="0.6" fill="#c01806"/><circle cx="574" cy="80" r="1.0" fill="#d01c06"/><circle cx="574" cy="84" r="1.0" fill="#b01606"/><circle cx="574" cy="82" r="0.8" fill="#b01606"/><circle cx="573" cy="81" r="0.6" fill="#800e02"/><circle cx="591" cy="86" r="0.6" fill="#b01606"/><circle cx="590" cy="88" r="0.6" fill="#d01c06"/><circle cx="594" cy="87" r="0.6" fill="#901004"/><circle cx="662" cy="138" r="0.6" fill="#c01806"/><circle cx="665" cy="139" r="1.2" fill="#b01606"/><circle cx="661" cy="137" r="1.5" fill="#800e02"/><circle cx="661" cy="137" r="1.2" fill="#f02a0c"/><circle cx="580" cy="177" r="0.6" fill="#f02a0c"/><circle cx="579" cy="177" r="0.6" fill="#b01606"/><circle cx="583" cy="178" r="1.5" fill="#d01c06"/><circle cx="582" cy="177" r="1.5" fill="#901004"/><circle cx="644" cy="87" r="1.2" fill="#d01c06"/><circle cx="646" cy="89" r="0.6" fill="#d01c06"/><circle cx="646" cy="88" r="1.0" fill="#901004"/><circle cx="603" cy="93" r="0.8" fill="#f02a0c"/><circle cx="600" cy="96" r="1.0" fill="#b01606"/><circle cx="599" cy="95" r="0.8" fill="#b01606"/><circle cx="601" cy="97" r="1.5" fill="#b01606"/><circle cx="587" cy="167" r="0.8" fill="#b01606"/><circle cx="588" cy="165" r="1.2" fill="#c01806"/><circle cx="588" cy="161" r="1.5" fill="#901004"/><circle cx="644" cy="156" r="0.6" fill="#f02a0c"/><circle cx="646" cy="153" r="1.2" fill="#d01c06"/><circle cx="646" cy="154" r="0.8" fill="#f02a0c"/><circle cx="644" cy="154" r="1.0" fill="#800e02"/><circle cx="574" cy="104" r="0.6" fill="#901004"/><circle cx="575" cy="103" r="1.5" fill="#b01606"/><circle cx="575" cy="104" r="1.5" fill="#901004"/><circle cx="625" cy="183" r="1.0" fill="#d01c06"/><circle cx="601" cy="75" r="1.0" fill="#c01806"/><circle cx="599" cy="78" r="0.8" fill="#901004"/><circle cx="599" cy="145" r="1.2" fill="#800e02"/><circle cx="575" cy="83" r="1.2" fill="#d01c06"/><circle cx="639" cy="116" r="1.5" fill="#c01806"/><circle cx="640" cy="116" r="0.6" fill="#b01606"/><circle cx="640" cy="120" r="0.8" fill="#d01c06"/><circle cx="619" cy="135" r="1.5" fill="#f02a0c"/><circle cx="621" cy="134" r="0.6" fill="#c01806"/><circle cx="618" cy="133" r="1.0" fill="#d01c06"/><circle cx="620" cy="135" r="1.0" fill="#d01c06"/><circle cx="590" cy="94" r="0.8" fill="#800e02"/><circle cx="588" cy="95" r="1.5" fill="#b01606"/><circle cx="588" cy="96" r="1.5" fill="#901004"/><circle cx="585" cy="95" r="1.0" fill="#800e02"/><circle cx="672" cy="72" r="1.2" fill="#f02a0c"/><circle cx="673" cy="74" r="1.5" fill="#800e02"/><circle cx="674" cy="72" r="0.8" fill="#f02a0c"/><circle cx="650" cy="72" r="1.2" fill="#c01806"/><circle cx="652" cy="74" r="1.0" fill="#c01806"/><circle cx="567" cy="136" r="1.2" fill="#c01806"/><circle cx="634" cy="82" r="1.5" fill="#c01806"/><circle cx="633" cy="83" r="1.2" fill="#f02a0c"/><circle cx="632" cy="83" r="1.0" fill="#f02a0c"/><circle cx="635" cy="74" r="0.6" fill="#901004"/><circle cx="664" cy="124" r="1.5" fill="#800e02"/><circle cx="619" cy="66" r="0.6" fill="#b01606"/><circle cx="663" cy="161" r="1.0" fill="#d01c06"/><circle cx="665" cy="163" r="1.0" fill="#d01c06"/><circle cx="664" cy="158" r="1.5" fill="#901004"/><circle cx="667" cy="162" r="1.0" fill="#f02a0c"/><circle cx="668" cy="162" r="0.6" fill="#f02a0c"/><circle cx="663" cy="159" r="0.8" fill="#f02a0c"/><circle cx="660" cy="167" r="1.2" fill="#d01c06"/><circle cx="657" cy="165" r="1.2" fill="#800e02"/><circle cx="643" cy="119" r="0.8" fill="#f02a0c"/><circle cx="644" cy="116" r="0.8" fill="#f02a0c"/><circle cx="642" cy="119" r="1.0" fill="#d01c06"/><circle cx="609" cy="178" r="0.6" fill="#f02a0c"/><circle cx="609" cy="177" r="1.0" fill="#d01c06"/><circle cx="607" cy="180" r="1.2" fill="#800e02"/><circle cx="607" cy="179" r="0.6" fill="#c01806"/><circle cx="608" cy="153" r="1.0" fill="#c01806"/><circle cx="630" cy="147" r="1.5" fill="#f02a0c"/><circle cx="630" cy="150" r="1.2" fill="#b01606"/><circle cx="628" cy="150" r="0.6" fill="#901004"/><circle cx="628" cy="149" r="1.0" fill="#b01606"/><circle cx="630" cy="152" r="0.8" fill="#b01606"/><circle cx="581" cy="134" r="0.8" fill="#b01606"/><circle cx="583" cy="133" r="0.8" fill="#d01c06"/><circle cx="581" cy="136" r="1.2" fill="#b01606"/><circle cx="581" cy="134" r="1.0" fill="#f02a0c"/><circle cx="578" cy="137" r="0.8" fill="#c01806"/><circle cx="629" cy="133" r="0.8" fill="#d01c06"/><circle cx="631" cy="132" r="1.2" fill="#d01c06"/><circle cx="627" cy="131" r="1.5" fill="#d01c06"/><circle cx="590" cy="107" r="0.8" fill="#b01606"/><circle cx="592" cy="108" r="1.2" fill="#c01806"/><circle cx="591" cy="106" r="1.5" fill="#f02a0c"/><circle cx="589" cy="109" r="0.6" fill="#901004"/><circle cx="666" cy="117" r="1.0" fill="#f02a0c"/><circle cx="663" cy="116" r="0.8" fill="#f02a0c"/><circle cx="665" cy="121" r="1.2" fill="#f02a0c"/><circle cx="663" cy="119" r="1.5" fill="#b01606"/><circle cx="662" cy="120" r="0.8" fill="#d01c06"/><circle cx="652" cy="66" r="0.6" fill="#800e02"/><circle cx="650" cy="65" r="1.2" fill="#f02a0c"/><circle cx="653" cy="68" r="1.0" fill="#b01606"/><circle cx="609" cy="93" r="1.2" fill="#f02a0c"/><circle cx="672" cy="70" r="1.2" fill="#b01606"/><circle cx="674" cy="70" r="1.2" fill="#f02a0c"/><circle cx="596" cy="169" r="1.2" fill="#b01606"/><circle cx="597" cy="172" r="0.8" fill="#901004"/><circle cx="595" cy="171" r="1.2" fill="#b01606"/><circle cx="599" cy="142" r="1.2" fill="#d01c06"/><circle cx="601" cy="100" r="0.8" fill="#b01606"/><circle cx="600" cy="101" r="0.6" fill="#c01806"/><circle cx="600" cy="101" r="0.6" fill="#800e02"/><circle cx="646" cy="92" r="0.8" fill="#800e02"/><circle cx="647" cy="92" r="0.8" fill="#f02a0c"/><circle cx="644" cy="89" r="1.5" fill="#800e02"/><circle cx="565" cy="187" r="1.2" fill="#800e02"/><circle cx="566" cy="190" r="0.6" fill="#b01606"/><circle cx="566" cy="188" r="0.8" fill="#901004"/><circle cx="567" cy="189" r="0.6" fill="#f02a0c"/><circle cx="566" cy="190" r="0.8" fill="#800e02"/><circle cx="682" cy="148" r="0.6" fill="#800e02"/><circle cx="679" cy="147" r="1.2" fill="#c01806"/><circle cx="679" cy="147" r="1.5" fill="#800e02"/><circle cx="679" cy="147" r="1.5" fill="#f02a0c"/><circle cx="679" cy="146" r="0.8" fill="#b01606"/><circle cx="623" cy="193" r="1.0" fill="#b01606"/><circle cx="622" cy="194" r="0.6" fill="#800e02"/><circle cx="624" cy="191" r="1.0" fill="#b01606"/><circle cx="648" cy="167" r="1.5" fill="#f02a0c"/><circle cx="612" cy="79" r="1.5" fill="#d01c06"/><circle cx="659" cy="125" r="1.2" fill="#800e02"/><circle cx="660" cy="124" r="0.8" fill="#901004"/><circle cx="659" cy="128" r="1.0" fill="#800e02"/><circle cx="598" cy="157" r="1.5" fill="#f02a0c"/><circle cx="596" cy="159" r="0.8" fill="#c01806"/><circle cx="594" cy="155" r="0.8" fill="#b01606"/><circle cx="679" cy="137" r="0.8" fill="#800e02"/><circle cx="678" cy="138" r="0.6" fill="#b01606"/><circle cx="680" cy="139" r="0.8" fill="#d01c06"/><circle cx="677" cy="139" r="0.8" fill="#800e02"/><circle cx="633" cy="79" r="1.0" fill="#d01c06"/><circle cx="631" cy="81" r="0.6" fill="#c01806"/><circle cx="632" cy="78" r="1.0" fill="#b01606"/><circle cx="632" cy="81" r="1.0" fill="#d01c06"/><circle cx="582" cy="148" r="0.8" fill="#800e02"/><circle cx="585" cy="148" r="1.2" fill="#c01806"/><circle cx="671" cy="75" r="0.6" fill="#f02a0c"/><circle cx="671" cy="74" r="0.8" fill="#d01c06"/><circle cx="670" cy="74" r="1.5" fill="#d01c06"/></g>
<g filter="url(#bl1)">
 <path d="M588 110 Q596 92 615 87 Q630 84 640 98 Q650 112 650 130 Q652 150 646 160 Q630 162 615 150 Q600 146 592 140 Q584 125 588 110 Z" fill="#a84c20" opacity="0.5"/>
 <ellipse cx="600.5" cy="127" rx="5" ry="7" fill="#0a0200" opacity="0.8"/>
 <path d="M622 97 Q634 99 639 112 Q643 130 639 146 Q633 151 627 147 Q620 135 620 118 Q619 105 622 97 Z" fill="#4a38c4" opacity="0.8"/>
 <ellipse cx="591" cy="113" rx="3.5" ry="6" fill="#4a38c4" opacity="0.75"/>
 <ellipse cx="605" cy="104" rx="2.5" ry="2.5" fill="#4a38c4" opacity="0.7"/>
 <ellipse cx="622" cy="92" rx="2.5" ry="2" fill="#4a38c4" opacity="0.6"/>
 <path d="M640 150 Q650 158 652 166 Q646 170 636 160 Z" fill="#b85428" opacity="0.7"/>
</g>
<g fill="none" stroke="#d0602a" stroke-width="2" opacity="0.35" filter="url(#bl06)">
 <path d="M588 110 Q596 92 615 87 Q630 84 640 98 Q650 112 650 130 Q652 150 646 160 Q630 162 615 150 Q600 146 592 140 Q584 125 588 110 Z"/>
 <path d="M612 90 Q606 110 610 130 Q616 150 628 156"/>
 <path d="M594 135 Q604 140 610 132"/>
</g>
<g fill="none" stroke="#e03010" stroke-width="0.7" opacity="0.6" filter="url(#bl06)">
 <path d="M624 104 Q630 112 628 122 Q624 130 632 138"/>
 <path d="M636 108 Q630 118 638 128"/>
 <path d="M622 140 Q630 134 636 146"/>
</g>
<rect x="229.3" y="31" width="1.5" height="187.5" fill="#c4c4c4"/><rect x="230.5" y="35.4" width="2" height="0.9" fill="#d0d0d0"/><rect x="230.5" y="43.6" width="2" height="0.9" fill="#d0d0d0"/><rect x="230.5" y="51.7" width="2" height="0.9" fill="#d0d0d0"/><rect x="230.5" y="59.9" width="4" height="0.9" fill="#d0d0d0"/><rect x="230.5" y="68.1" width="2" height="0.9" fill="#d0d0d0"/><rect x="230.5" y="76.2" width="2" height="0.9" fill="#d0d0d0"/><rect x="230.5" y="84.4" width="2" height="0.9" fill="#d0d0d0"/><rect x="230.5" y="92.6" width="4" height="0.9" fill="#d0d0d0"/><rect x="230.5" y="100.8" width="2" height="0.9" fill="#d0d0d0"/><rect x="230.5" y="108.9" width="2" height="0.9" fill="#d0d0d0"/><rect x="230.5" y="117.1" width="2" height="0.9" fill="#d0d0d0"/><rect x="230.5" y="125.3" width="4" height="0.9" fill="#d0d0d0"/><rect x="230.5" y="133.4" width="2" height="0.9" fill="#d0d0d0"/><rect x="230.5" y="141.6" width="2" height="0.9" fill="#d0d0d0"/><rect x="230.5" y="149.8" width="2" height="0.9" fill="#d0d0d0"/><rect x="230.5" y="157.9" width="2" height="0.9" fill="#d0d0d0"/><rect x="230.5" y="166.1" width="2" height="0.9" fill="#d0d0d0"/><rect x="230.5" y="174.3" width="2" height="0.9" fill="#d0d0d0"/><rect x="230.5" y="182.4" width="2" height="0.9" fill="#d0d0d0"/><rect x="230.5" y="190.6" width="2" height="0.9" fill="#d0d0d0"/><rect x="230.5" y="198.8" width="2" height="0.9" fill="#d0d0d0"/><rect x="230.5" y="207.0" width="2" height="0.9" fill="#d0d0d0"/><rect x="230.5" y="215.1" width="2" height="0.9" fill="#d0d0d0"/><rect x="229.3" y="216.8" width="259.7" height="1.8" fill="#c4c4c4"/><rect x="446.8" y="214.8" width="0.9" height="2" fill="#d0d0d0"/><rect x="424.4" y="214.8" width="0.9" height="2" fill="#d0d0d0"/><rect x="402.0" y="214.8" width="0.9" height="2" fill="#d0d0d0"/><rect x="379.6" y="214.8" width="0.9" height="2" fill="#d0d0d0"/><rect x="357.2" y="214.8" width="0.9" height="2" fill="#d0d0d0"/><rect x="334.8" y="214.8" width="0.9" height="2" fill="#d0d0d0"/><rect x="312.4" y="214.8" width="0.9" height="2" fill="#d0d0d0"/><rect x="290.0" y="214.8" width="0.9" height="2" fill="#d0d0d0"/><rect x="267.6" y="214.8" width="0.9" height="2" fill="#d0d0d0"/><rect x="245.2" y="214.8" width="0.9" height="2" fill="#d0d0d0"/><rect x="469.1" y="214.8" width="0.9" height="2" fill="#d0d0d0"/><rect x="229.3" y="225" width="1.5" height="188.5" fill="#c4c4c4"/><rect x="230.5" y="233.1" width="2" height="0.9" fill="#d0d0d0"/><rect x="230.5" y="244.5" width="2" height="0.9" fill="#d0d0d0"/><rect x="230.5" y="256.0" width="2" height="0.9" fill="#d0d0d0"/><rect x="230.5" y="267.5" width="4" height="0.9" fill="#d0d0d0"/><rect x="230.5" y="279.0" width="2" height="0.9" fill="#d0d0d0"/><rect x="230.5" y="290.5" width="2" height="0.9" fill="#d0d0d0"/><rect x="230.5" y="301.9" width="2" height="0.9" fill="#d0d0d0"/><rect x="230.5" y="313.4" width="4" height="0.9" fill="#d0d0d0"/><rect x="230.5" y="324.9" width="2" height="0.9" fill="#d0d0d0"/><rect x="230.5" y="336.4" width="2" height="0.9" fill="#d0d0d0"/><rect x="230.5" y="347.9" width="2" height="0.9" fill="#d0d0d0"/><rect x="230.5" y="359.3" width="4" height="0.9" fill="#d0d0d0"/><rect x="230.5" y="370.8" width="2" height="0.9" fill="#d0d0d0"/><rect x="230.5" y="382.3" width="2" height="0.9" fill="#d0d0d0"/><rect x="230.5" y="393.8" width="2" height="0.9" fill="#d0d0d0"/><rect x="230.5" y="405.3" width="2" height="0.9" fill="#d0d0d0"/><rect x="229.3" y="411.8" width="259.7" height="1.8" fill="#c4c4c4"/><rect x="242.0" y="409.8" width="0.9" height="2" fill="#d0d0d0"/><rect x="256.7" y="409.8" width="0.9" height="2" fill="#d0d0d0"/><rect x="271.3" y="407.8" width="0.9" height="4" fill="#d0d0d0"/><rect x="285.9" y="409.8" width="0.9" height="2" fill="#d0d0d0"/><rect x="300.5" y="409.8" width="0.9" height="2" fill="#d0d0d0"/><rect x="315.2" y="409.8" width="0.9" height="2" fill="#d0d0d0"/><rect x="329.8" y="407.8" width="0.9" height="4" fill="#d0d0d0"/><rect x="344.4" y="409.8" width="0.9" height="2" fill="#d0d0d0"/><rect x="359.0" y="409.8" width="0.9" height="2" fill="#d0d0d0"/><rect x="373.7" y="409.8" width="0.9" height="2" fill="#d0d0d0"/><rect x="388.3" y="407.8" width="0.9" height="4" fill="#d0d0d0"/><rect x="402.9" y="409.8" width="0.9" height="2" fill="#d0d0d0"/><rect x="417.5" y="409.8" width="0.9" height="2" fill="#d0d0d0"/><rect x="432.2" y="409.8" width="0.9" height="2" fill="#d0d0d0"/><rect x="446.8" y="407.8" width="0.9" height="4" fill="#d0d0d0"/><rect x="461.4" y="409.8" width="0.9" height="2" fill="#d0d0d0"/><rect x="476.0" y="409.8" width="0.9" height="2" fill="#d0d0d0"/><rect x="490.5" y="232" width="1.5" height="181.5" fill="#c4c4c4"/><rect x="491.5" y="408.9" width="2" height="0.9" fill="#d0d0d0"/><rect x="491.5" y="397.2" width="2" height="0.9" fill="#d0d0d0"/><rect x="491.5" y="385.5" width="2" height="0.9" fill="#d0d0d0"/><rect x="491.5" y="373.8" width="2" height="0.9" fill="#d0d0d0"/><rect x="491.5" y="362.1" width="4" height="0.9" fill="#d0d0d0"/><rect x="491.5" y="350.4" width="2" height="0.9" fill="#d0d0d0"/><rect x="491.5" y="338.7" width="2" height="0.9" fill="#d0d0d0"/><rect x="491.5" y="327.0" width="2" height="0.9" fill="#d0d0d0"/><rect x="491.5" y="315.3" width="4" height="0.9" fill="#d0d0d0"/><rect x="491.5" y="303.6" width="2" height="0.9" fill="#d0d0d0"/><rect x="491.5" y="291.9" width="2" height="0.9" fill="#d0d0d0"/><rect x="491.5" y="280.2" width="2" height="0.9" fill="#d0d0d0"/><rect x="491.5" y="268.5" width="4" height="0.9" fill="#d0d0d0"/><rect x="491.5" y="256.8" width="2" height="0.9" fill="#d0d0d0"/><rect x="491.5" y="245.1" width="2" height="0.9" fill="#d0d0d0"/><rect x="491.5" y="233.4" width="2" height="0.9" fill="#d0d0d0"/><rect x="490" y="411.8" width="260" height="1.8" fill="#c4c4c4"/><rect x="513.9" y="409.8" width="0.9" height="2" fill="#d0d0d0"/><rect x="534.9" y="409.8" width="0.9" height="2" fill="#d0d0d0"/><rect x="555.9" y="409.8" width="0.9" height="2" fill="#d0d0d0"/><rect x="576.9" y="407.8" width="0.9" height="4" fill="#d0d0d0"/><rect x="597.9" y="409.8" width="0.9" height="2" fill="#d0d0d0"/><rect x="618.9" y="409.8" width="0.9" height="2" fill="#d0d0d0"/><rect x="639.9" y="409.8" width="0.9" height="2" fill="#d0d0d0"/><rect x="660.9" y="407.8" width="0.9" height="4" fill="#d0d0d0"/><rect x="681.9" y="409.8" width="0.9" height="2" fill="#d0d0d0"/><rect x="702.9" y="409.8" width="0.9" height="2" fill="#d0d0d0"/><rect x="723.9" y="409.8" width="0.9" height="2" fill="#d0d0d0"/><rect x="744.9" y="407.8" width="0.9" height="4" fill="#d0d0d0"/>
<rect x="489" y="31" width="1" height="382" fill="#2a2a2a"/>
</svg>
<div class="serif" style="left:239px;top:55.6px">1395.50 MHz</div>
<div class="serif" style="left:239px;top:88.0px">1396.00 MHz</div>
<div class="serif" style="left:239px;top:119.4px">1396.50 MHz</div>
<div class="serif" style="left:239px;top:151.7px">1397.00 MHz</div>
<div class="serif" style="left:239px;top:183.7px">1397.50 MHz</div>
<div class="serif" style="left:385.8px;top:205.8px">72° 55'  0"</div>
<div class="serif" style="left:237px;top:264.7px">44° 38'  0"</div>
<div class="serif" style="left:237px;top:310.7px">44° 36'  0"</div>
<div class="serif" style="left:237px;top:355.2px">44° 34'  0"</div>
<div class="serif" style="left:258px;top:400px">1395.00 MHz</div>
<div class="serif" style="left:316.3px;top:400px">1396.00 MHz</div>
<div class="serif" style="left:374.7px;top:400px">1397.00 MHz</div>
<div class="serif" style="left:433.3px;top:400px">1398.00 MHz</div>
<div class="serif" style="left:497.7px;top:263.7px">44° 38'  0"</div>
<div class="serif" style="left:497.7px;top:311.0px">44° 36'  0"</div>
<div class="serif" style="left:497.7px;top:357.2px">44° 34'  0"</div>
<div class="serif" style="left:561px;top:399px">73°  0'  0"</div>
<div class="serif" style="left:645px;top:399px">72° 55'  0"</div>
<div class="ab" style="left:229px;top:24.5px;width:261px;height:6.6px;background:#f25c40;border-top:0.8px solid #d8401f;border-bottom:0.8px solid #d8401f"></div>
<svg class="ab" style="left:231px;top:26.7px" width="4" height="3" viewBox="0 0 4 3"><path d="M0.4 0.4 H3.6 L2 2.4 Z" fill="#333"/></svg>
<div class="ab" style="left:237px;top:25.1px;width:5.5px;height:5.4px;background:#f7a08f"></div>
<div class="t" style="left:238px;top:25.5px;font-size:5px;font-weight:bold;color:#333">R</div>
<div class="ab" style="left:244.5px;top:26.1px;width:3.6px;height:3.6px;border-radius:50%;background:#333"></div>
<div class="ab" style="left:252.5px;top:26.9px;width:211.10000000000002px;height:1.7px;background:#e0e0e0"></div>
<div class="ab" style="left:252.5px;top:26.9px;width:116.19999999999999px;height:1.7px;background:#79a6d6"></div>
<div class="ab" style="left:367.5px;top:25.5px;width:2.6px;height:4.6px;background:#f4f4f4;border:0.4px solid #bbb"></div>
<div class="ab" style="left:465.2px;top:25.1px;width:24.80000000000001px;height:5.4px;background:#f8826f"></div>
<div class="t" style="left:466.4px;top:25.7px;font-size:4.7px;color:#4a3a30">S: 40.000°</div>
<div class="ab" style="left:490px;top:24.5px;width:260px;height:6.6px;background:#7a86e8;border-top:0.8px solid #5f6ad4;border-bottom:0.8px solid #5f6ad4"></div>
<svg class="ab" style="left:492px;top:26.7px" width="4" height="3" viewBox="0 0 4 3"><path d="M0.4 0.4 H3.6 L2 2.4 Z" fill="#333"/></svg>
<div class="ab" style="left:498px;top:25.1px;width:5.5px;height:5.4px;background:#aab2f4"></div>
<div class="t" style="left:499px;top:25.5px;font-size:5px;font-weight:bold;color:#333">1</div>
<div class="ab" style="left:505px;top:25.9px;width:4px;height:4px;border-radius:50%;border:0.6px solid #556;background:#9aa0e8"></div>
<div class="ab" style="left:229px;top:218.8px;width:261px;height:6.6px;background:#ead544;border-top:0.8px solid #c8b020;border-bottom:0.8px solid #c8b020"></div>
<svg class="ab" style="left:231px;top:221.0px" width="4" height="3" viewBox="0 0 4 3"><path d="M0.4 0.4 H3.6 L2 2.4 Z" fill="#333"/></svg>
<div class="ab" style="left:237px;top:219.4px;width:5.5px;height:5.4px;background:#f6ec98"></div>
<div class="t" style="left:238px;top:219.8px;font-size:5px;font-weight:bold;color:#333">Y</div>
<div class="ab" style="left:244.5px;top:220.4px;width:3.6px;height:3.6px;border-radius:50%;background:#333"></div>
<div class="ab" style="left:252.5px;top:221.20000000000002px;width:208.89999999999998px;height:1.7px;background:#e0e0e0"></div>
<div class="ab" style="left:252.5px;top:221.20000000000002px;width:83.30000000000001px;height:1.7px;background:#79a6d6"></div>
<div class="ab" style="left:334.6px;top:219.8px;width:2.6px;height:4.6px;background:#f4f4f4;border:0.4px solid #bbb"></div>
<div class="ab" style="left:462.5px;top:219.4px;width:27.5px;height:5.4px;background:#f4e67a"></div>
<div class="t" style="left:463.7px;top:220.0px;font-size:4.7px;color:#4a3a30">R: -43.000°</div>
<div class="ab" style="left:490px;top:218.8px;width:260px;height:6.6px;background:#6dc04e;border-top:0.8px solid #4e9c34;border-bottom:0.8px solid #4e9c34"></div>
<svg class="ab" style="left:492px;top:221.0px" width="4" height="3" viewBox="0 0 4 3"><path d="M0.4 0.4 H3.6 L2 2.4 Z" fill="#333"/></svg>
<div class="ab" style="left:498px;top:219.4px;width:5.5px;height:5.4px;background:#8fe070"></div>
<div class="t" style="left:499px;top:219.8px;font-size:5px;font-weight:bold;color:#333">G</div>
<div class="ab" style="left:505.5px;top:220.4px;width:3.6px;height:3.6px;border-radius:50%;background:#333"></div>
<div class="ab" style="left:513.7px;top:221.20000000000002px;width:210.0999999999999px;height:1.7px;background:#e0e0e0"></div>
<div class="ab" style="left:513.7px;top:221.20000000000002px;width:103.29999999999995px;height:1.7px;background:#79a6d6"></div>
<div class="ab" style="left:615.8px;top:219.8px;width:2.6px;height:4.6px;background:#f4f4f4;border:0.4px solid #bbb"></div>
<div class="ab" style="left:725.4px;top:219.4px;width:24.600000000000023px;height:5.4px;background:#8ede6c"></div>
<div class="t" style="left:726.6px;top:220.0px;font-size:4.7px;color:#4a3a30">A: 36.000°</div>
<div class="ab" style="left:737px;top:415px;width:12.5px;height:12px;border:0.7px solid #d0d0d0;border-radius:1.5px;background:#f6f6f6"></div>
<svg class="ab" style="left:738px;top:415.5px" width="11" height="11" viewBox="0 0 11 11"><circle cx="5.5" cy="5.5" r="4.9" fill="#ee1111"/><path d="M3.5 3.5 L7.5 7.5 M7.5 3.5 L3.5 7.5" stroke="#fff" stroke-width="1.3" stroke-linecap="round"/></svg>
<div class="ab" style="left:43.7px;top:127.3px;width:172.6px;height:12px;border:1px solid #f03838;border-radius:3.5px;background:rgba(255,255,255,0.9)"></div>
<div class="ann" style="left:56px;top:129.2px">click the eye to show the rendering</div>
<div class="ab" style="left:241.5px;top:143.8px;width:135px;height:24px;border:1px solid #e82828;background:#fff"></div>
<div class="ann" style="left:242.3px;top:145px;line-height:8.6px">Synchornize the 3-D color function
 to the one for the 2-D Views</div>
<div class="ab" style="left:250.6px;top:180.9px;width:131.2px;height:28.7px;border:1px solid #e82828;background:#fff"></div>
<div class="ann" style="left:251.3px;top:181.5px;line-height:9px">pre-builted color functions. if you
want to change them go to
the VolumeRendering module</div>
<div class="ab" style="left:17.2px;top:225.5px;width:118.5px;height:20.2px;border:1px solid #e82828;background:#fff"></div>
<div class="ann" style="left:19.4px;top:226.5px;line-height:8.5px">Shift the color function
used for the 3-D visualization</div>
<svg class="ab" style="left:0;top:0" width="750" height="427" viewBox="0 0 750 427">
<g stroke="#f52222" stroke-width="1.1" fill="none" stroke-linecap="round">
<path d="M241.8 149.5 L151.2 151 M160.1 145.1 L151.2 151 L160.4 155.4"/>
<path d="M250.9 181.8 L193.1 162.7 M204.8 160.5 L193.1 162.7 L200 170.5"/>
<path d="M98.4 226 L155 171.5 M148.5 174 L155 171.5 L155 181.6"/>
</g></svg>
</body></html>
